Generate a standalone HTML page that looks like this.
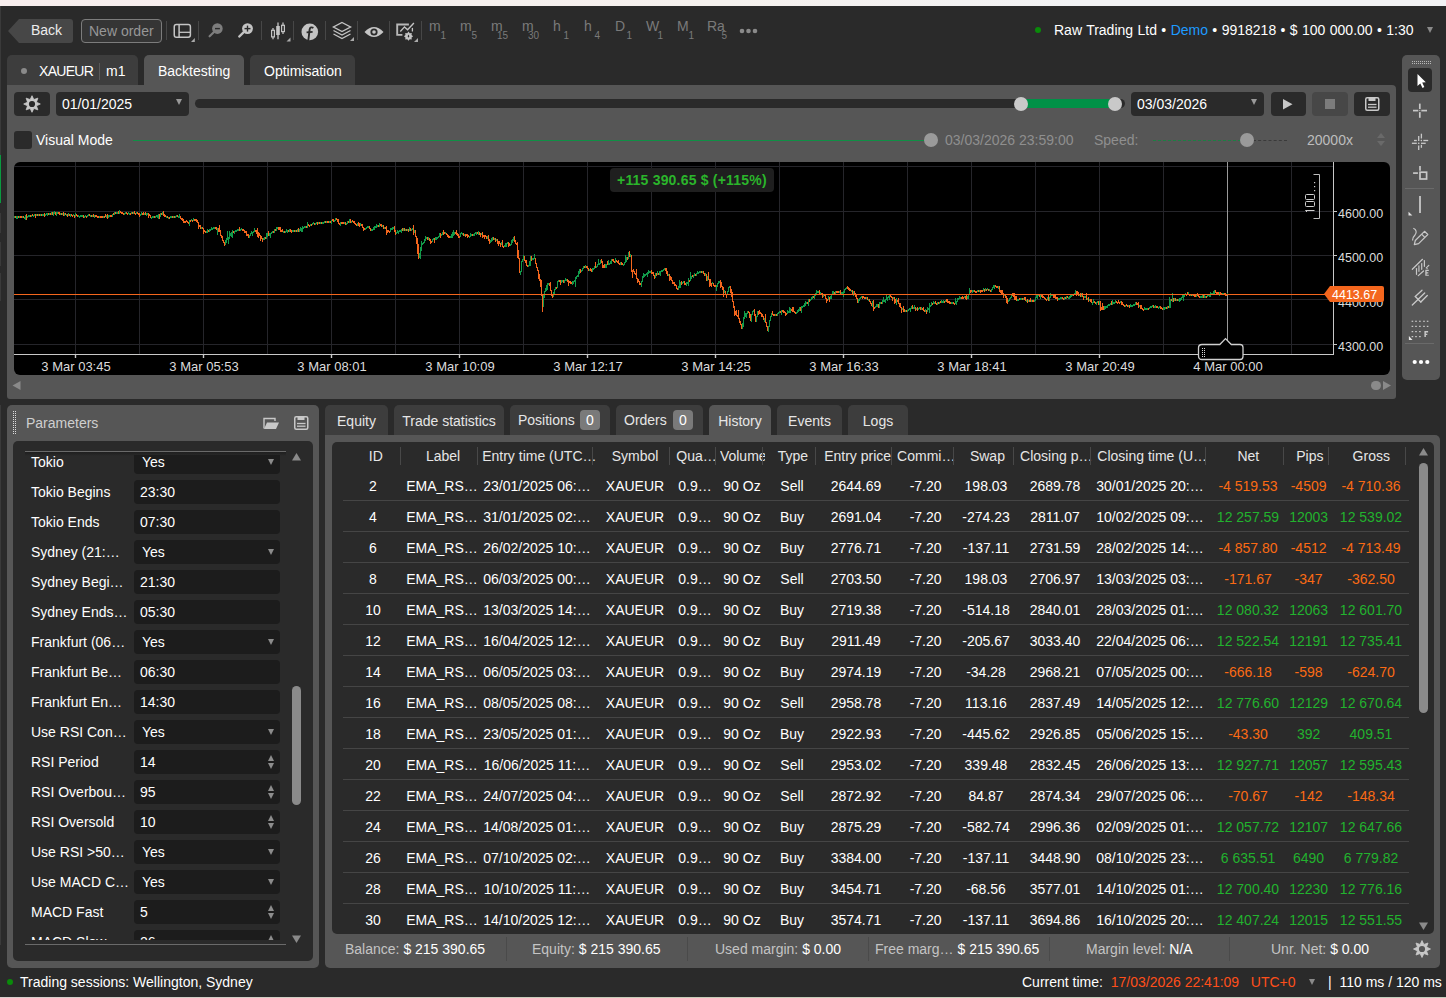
<!DOCTYPE html><html><head><meta charset="utf-8"><style>
*{box-sizing:border-box;margin:0;padding:0}
html,body{width:1446px;height:998px;overflow:hidden;background:#2a2a2a;font-family:"Liberation Sans",sans-serif;font-size:14px;line-height:16px;color:#fff}
.a{position:absolute;white-space:nowrap}
.sep{position:absolute;width:1px;background:#474747;top:21px;height:19px}
.tab{position:absolute;background:#3d3d3d;border-radius:5px 5px 0 0;height:30px;top:55px}
.tf{position:absolute;top:18px;color:#7a7a7a;font-size:14px}
.tf i{position:absolute;font-style:normal;font-size:10px;line-height:10px;top:13px}
.pl{position:absolute;left:31px;color:#fff}
.pb{position:absolute;left:134px;width:146px;height:24px;background:#1c1c1c;border-radius:4px}
.dd{position:absolute;left:268px;width:0;height:0;border-left:3px solid transparent;border-right:3px solid transparent;border-top:6px solid #8c8c8c}
.su{position:absolute;left:268px;width:0;height:0;border-left:3px solid transparent;border-right:3px solid transparent;border-bottom:6px solid #8c8c8c}
.sd{position:absolute;left:268px;width:0;height:0;border-left:3px solid transparent;border-right:3px solid transparent;border-top:6px solid #8c8c8c}
.th{position:absolute;top:448px;color:#e6e6e6;text-align:center;white-space:nowrap}
.hs{position:absolute;top:447px;width:1px;height:18px;background:#484848}
.rl{position:absolute;left:343px;width:1066px;height:1px;background:#454545}
.c{position:absolute;text-align:center;white-space:nowrap;color:#fff}
.g{color:#22b22e!important}.o{color:#fb6a14!important}
.ft{position:absolute;top:941px;color:#c4c4c4;white-space:nowrap}
.ft b{font-weight:normal;color:#fff}
.fs{position:absolute;top:937px;width:1px;height:24px;background:#4a4a4a}
.xl{position:absolute;top:359px;font-size:13px;color:#dcdcdc;text-align:center;width:100px}
.yl{position:absolute;left:1338px;font-size:12.5px;color:#dcdcdc}
</style></head><body>
<div class="a" style="left:0;top:0;width:1446px;height:6px;background:linear-gradient(to right,#f8eeee,#f5f1ee 50%,#f2f2f4 75%,#f2f2f4)"></div>
<div class="a" style="left:0;top:6px;width:1px;height:149px;background:#3a3a3a"></div>
<div class="a" style="left:0;top:155px;width:1px;height:48px;background:#0a9a40"></div>
<div class="a" style="left:0;top:213px;width:1px;height:20px;background:#3a3a3a"></div>
<div class="a" style="left:0;top:242px;width:1px;height:24px;background:#3a3a3a"></div>
<div class="a" style="left:0;top:273px;width:1px;height:28px;background:#3a3a3a"></div>
<div class="a" style="left:0;top:405px;width:1px;height:540px;background:#3a3a3a"></div>
<div class="a" style="left:0;top:997px;width:1446px;height:1px;background:linear-gradient(to right,#d8cfcc,#c9cdb9 45%,#c3cfbd)"></div>
<svg class="a" style="left:8px;top:19px" width="65" height="24"><path d="M11 0 H62 Q65 0 65 3 V21 Q65 24 62 24 H11 L0 12 Z" fill="#474747"/></svg>
<div class="a" style="left:31px;top:22px;color:#ececec">Back</div>
<div class="a" style="left:81px;top:19px;width:81px;height:24px;border:1px solid #7c7c7c;border-radius:4px;background:#353535"></div>
<div class="a" style="left:89px;top:23px;color:#979797">New order</div>
<div class="sep" style="left:166px"></div>
<div class="sep" style="left:198px"></div>
<div class="sep" style="left:261px"></div>
<div class="sep" style="left:293px"></div>
<div class="sep" style="left:325px"></div>
<div class="sep" style="left:357px"></div>
<div class="sep" style="left:389px"></div>
<div class="sep" style="left:421px"></div>
<svg class="a" style="left:172px;top:22px" width="26" height="22">
<rect x="2.25" y="2.5" width="16.15" height="12.8" rx="2.2" fill="none" stroke="#c4c4c4" stroke-width="1.5"/>
<line x1="7.1" y1="3" x2="7.1" y2="15" stroke="#c4c4c4" stroke-width="1.5"/><line x1="7.1" y1="10.3" x2="18" y2="10.3" stroke="#c4c4c4" stroke-width="1.3"/>
<path d="M22.8 16 L22.8 20 L19 20 Z" fill="#aaa"/></svg>
<svg class="a" style="left:206px;top:22px" width="20" height="18">
<circle cx="11.4" cy="6.6" r="5.3" fill="#7d7d7d"/><line x1="3.6" y1="14.3" x2="8" y2="10" stroke="#7d7d7d" stroke-width="2.2" stroke-linecap="round"/>
<line x1="9" y1="6.6" x2="13.9" y2="6.6" stroke="#2a2a2a" stroke-width="1.4"/></svg>
<svg class="a" style="left:236px;top:22px" width="20" height="18">
<circle cx="11.5" cy="6.6" r="5.4" fill="#c4c4c4"/><line x1="3.2" y1="14.6" x2="7.5" y2="10.4" stroke="#c4c4c4" stroke-width="2.2" stroke-linecap="round"/>
<line x1="8.5" y1="6.6" x2="14.5" y2="6.6" stroke="#2a2a2a" stroke-width="1.4"/><line x1="11.5" y1="3.6" x2="11.5" y2="9.6" stroke="#2a2a2a" stroke-width="1.4"/></svg>
<svg class="a" style="left:269px;top:21px" width="24" height="22">
<line x1="4" y1="7" x2="4" y2="18.2" stroke="#c4c4c4" stroke-width="1.3"/><rect x="2.6" y="9.3" width="2.8" height="6.6" fill="#2a2a2a" stroke="#c4c4c4" stroke-width="1.2"/>
<line x1="9" y1="1.6" x2="9" y2="18.2" stroke="#c4c4c4" stroke-width="1.3"/><rect x="7.2" y="5" width="3.6" height="9" fill="#c4c4c4"/>
<line x1="14" y1="1.6" x2="14" y2="13" stroke="#c4c4c4" stroke-width="1.3"/><rect x="12.6" y="4.3" width="2.8" height="6.3" fill="#2a2a2a" stroke="#c4c4c4" stroke-width="1.2"/>
<path d="M21.5 16.5 L21.5 20.5 L17.5 20.5 Z" fill="#aaa"/></svg>
<svg class="a" style="left:301px;top:23px" width="18" height="18">
<circle cx="8.8" cy="8.9" r="8.3" fill="#c4c4c4"/>
<path d="M12.4 4.9 C10.8 3.9 8.9 4.2 8.6 6.6 L7.4 17" fill="none" stroke="#2a2a2a" stroke-width="1.9"/>
<line x1="5.6" y1="9.4" x2="11.6" y2="8.9" stroke="#2a2a2a" stroke-width="1.8"/></svg>
<svg class="a" style="left:332px;top:21px" width="24" height="22">
<path d="M10 1.5 L18.5 6 L10 10.5 L1.5 6 Z" fill="none" stroke="#c4c4c4" stroke-width="1.4"/>
<path d="M1.5 9.5 L10 14 L18.5 9.5" fill="none" stroke="#c4c4c4" stroke-width="1.4"/>
<path d="M1.5 13 L10 17.5 L18.5 13" fill="none" stroke="#c4c4c4" stroke-width="1.4"/>
<path d="M22 16 L22 20 L18 20 Z" fill="#aaa"/></svg>
<svg class="a" style="left:364px;top:25px" width="20" height="14">
<path d="M0.5 7 Q10 -3 19.5 7 Q10 17 0.5 7 Z" fill="#c4c4c4"/>
<circle cx="10" cy="7" r="3.6" fill="#2a2a2a"/><circle cx="10" cy="7" r="1.8" fill="#c4c4c4"/></svg>
<svg class="a" style="left:395px;top:22px" width="25" height="22">
<path d="M13.9 2.5 H2.2 V12.9 H7.4" fill="none" stroke="#b8b8b8" stroke-width="1.9"/>
<path d="M5.3 9.5 L9.5 4.9 L12.6 7.7 L18.9 0.9" fill="none" stroke="#c4c4c4" stroke-width="1.4"/>
<line x1="17.4" y1="5.9" x2="17.4" y2="9.5" stroke="#c4c4c4" stroke-width="1.3"/>
<polygon points="13.50,9.60 14.76,11.15 16.75,10.95 16.55,12.94 18.10,14.20 16.55,15.46 16.75,17.45 14.76,17.25 13.50,18.80 12.24,17.25 10.25,17.45 10.45,15.46 8.90,14.20 10.45,12.94 10.25,10.95 12.24,11.15" fill="#c4c4c4"/><path d="M13.5 12.6 L14.4 14.2 L13.5 15.8 L12.6 14.2 Z" fill="#2a2a2a"/>
<path d="M23 16 L23 20 L19 20 Z" fill="#aaa"/></svg>
<div class="tf" style="left:429px">m<i style="left:0;width:17px;text-align:right">1</i></div>
<div class="tf" style="left:460px">m<i style="left:0;width:17px;text-align:right">5</i></div>
<div class="tf" style="left:491px">m<i style="left:0;width:17px;text-align:right">15</i></div>
<div class="tf" style="left:522px">m<i style="left:0;width:17px;text-align:right">30</i></div>
<div class="tf" style="left:553px">h<i style="left:0;width:16px;text-align:right">1</i></div>
<div class="tf" style="left:584px">h<i style="left:0;width:16px;text-align:right">4</i></div>
<div class="tf" style="left:615px">D<i style="left:0;width:17px;text-align:right">1</i></div>
<div class="tf" style="left:646px">W<i style="left:0;width:17px;text-align:right">1</i></div>
<div class="tf" style="left:677px">M<i style="left:0;width:17px;text-align:right">1</i></div>
<div class="tf" style="left:707px">Ra<i style="left:0;width:20px;text-align:right">5</i></div>
<svg class="a" style="left:739px;top:28px" width="20" height="6"><circle cx="3" cy="3" r="2.3" fill="#8a8a8a"/><circle cx="9.5" cy="3" r="2.3" fill="#8a8a8a"/><circle cx="16" cy="3" r="2.3" fill="#8a8a8a"/></svg>
<div class="a" style="left:1035px;top:27px;width:6px;height:6px;border-radius:3px;background:#0a8a0a"></div>
<div class="a" style="left:1054px;top:22px;color:#fff;word-spacing:0.5px">Raw Trading Ltd • <span style="color:#1e9bff">Demo</span> • 9918218 • $ 100 000.00 • 1:30</div>
<div class="a" style="left:1427px;top:27px;width:0;height:0;border-left:3px solid transparent;border-right:3px solid transparent;border-top:6px solid #8a8a8a"></div>
<div class="tab" style="left:7px;width:131px"></div>
<div class="a" style="left:21px;top:68px;width:6px;height:6px;border-radius:3px;background:#8a8a8a"></div>
<div class="a" style="left:39px;top:63px;letter-spacing:-0.7px">XAUEUR</div>
<div class="a" style="left:99px;top:63px;width:1px;height:17px;background:#5a5a5a"></div>
<div class="a" style="left:106px;top:63px">m1</div>
<div class="tab" style="left:144px;width:100px;background:#565656"></div>
<div class="a" style="left:158px;top:63px">Backtesting</div>
<div class="tab" style="left:250px;width:105px"></div>
<div class="a" style="left:264px;top:63px">Optimisation</div>
<div class="a" style="left:7px;top:85px;width:1389px;height:314px;background:#565656;border-radius:0 4px 3px 3px"></div>
<div class="a" style="left:14px;top:92px;width:36px;height:24px;background:#2a2a2a;border-radius:4px"></div>
<svg class="a" style="left:22px;top:94px" width="20" height="20"><polygon points="10.00,1.70 11.84,5.55 15.87,4.13 14.45,8.16 18.30,10.00 14.45,11.84 15.87,15.87 11.84,14.45 10.00,18.30 8.16,14.45 4.13,15.87 5.55,11.84 1.70,10.00 5.55,8.16 4.13,4.13 8.16,5.55" fill="#c8c8c8" stroke="#c8c8c8" stroke-width="0.8" stroke-linejoin="round"/><circle cx="10" cy="10" r="4.6" fill="#c8c8c8"/><circle cx="10" cy="10" r="3.1" fill="#2a2a2a"/></svg>
<div class="a" style="left:56px;top:92px;width:133px;height:24px;background:#2a2a2a;border-radius:4px"></div>
<div class="a" style="left:62px;top:96px">01/01/2025</div>
<div class="a" style="left:176px;top:99px;width:0;height:0;border-left:3px solid transparent;border-right:3px solid transparent;border-top:6px solid #999"></div>
<div class="a" style="left:195px;top:99px;width:930px;height:9px;background:#2a2a2a;border-radius:4.5px"></div>
<div class="a" style="left:1021px;top:99px;width:94px;height:9px;background:#009147"></div>
<div class="a" style="left:1014px;top:97px;width:14px;height:14px;border-radius:7px;background:#c9c9c9"></div>
<div class="a" style="left:1108px;top:97px;width:14px;height:14px;border-radius:7px;background:#c9c9c9"></div>
<div class="a" style="left:1131px;top:92px;width:133px;height:24px;background:#2a2a2a;border-radius:4px"></div>
<div class="a" style="left:1137px;top:96px">03/03/2026</div>
<div class="a" style="left:1251px;top:99px;width:0;height:0;border-left:3px solid transparent;border-right:3px solid transparent;border-top:6px solid #999"></div>
<div class="a" style="left:1271px;top:92px;width:35px;height:24px;background:#2a2a2a;border-radius:4px"></div>
<svg class="a" style="left:1283px;top:99px" width="10" height="11"><path d="M0 0 L9.5 5.3 L0 10.6 Z" fill="#c8c8c8"/></svg>
<div class="a" style="left:1312px;top:92px;width:36px;height:24px;background:#474747;border-radius:4px"></div>
<div class="a" style="left:1325px;top:99px;width:10px;height:10px;background:#7c7c7c"></div>
<div class="a" style="left:1354px;top:92px;width:36px;height:24px;background:#2a2a2a;border-radius:4px"></div>
<svg class="a" style="left:1365px;top:97px" width="15" height="14"><rect x="0.75" y="0.75" width="13" height="12.5" rx="1.5" fill="none" stroke="#c8c8c8" stroke-width="1.5"/>
<rect x="3.5" y="0.5" width="7" height="3.5" fill="#c8c8c8"/><line x1="3" y1="7.5" x2="11.5" y2="7.5" stroke="#c8c8c8" stroke-width="1.3"/><line x1="3" y1="10.2" x2="11.5" y2="10.2" stroke="#c8c8c8" stroke-width="1.3"/></svg>
<div class="a" style="left:14px;top:131px;width:18px;height:18px;background:#2a2a2a;border-radius:3px"></div>
<div class="a" style="left:36px;top:132px">Visual Mode</div>
<div class="a" style="left:133px;top:140px;width:799px;height:1px;background:#0f8f45"></div>
<div class="a" style="left:924px;top:133px;width:14px;height:14px;border-radius:7px;background:#9a9a9a"></div>
<div class="a" style="left:945px;top:132px;color:#8f8f8f">03/03/2026 23:59:00</div>
<div class="a" style="left:1094px;top:132px;color:#8f8f8f">Speed:</div>
<div class="a" style="left:1153px;top:140px;width:93px;height:0;border-top:1px dashed #1c7f43"></div>
<div class="a" style="left:1253px;top:140px;width:34px;height:0;border-top:1px dashed #3a3a3a"></div>
<div class="a" style="left:1240px;top:133px;width:14px;height:14px;border-radius:7px;background:#9a9a9a"></div>
<div class="a" style="left:1307px;top:132px;color:#bdbdbd">20000x</div>
<div class="a" style="left:1377px;top:133px;width:0;height:0;border-left:4px solid transparent;border-right:4px solid transparent;border-bottom:5px solid #6a6a6a"></div>
<div class="a" style="left:1377px;top:141px;width:0;height:0;border-left:4px solid transparent;border-right:4px solid transparent;border-top:5px solid #6a6a6a"></div>
<svg class="a" style="left:0;top:0" width="1446" height="998">
<defs><clipPath id="cc"><rect x="14" y="162" width="1376" height="213" rx="6"/></clipPath><clipPath id="pc"><rect x="14" y="162" width="1319" height="192"/></clipPath></defs>
<rect x="14" y="162" width="1376" height="213" rx="6" fill="#000"/>
<g clip-path="url(#pc)">
<line x1="75.5" y1="162" x2="75.5" y2="354" stroke="#25252a" stroke-width="1"/>
<line x1="139.5" y1="162" x2="139.5" y2="354" stroke="#25252a" stroke-width="1"/>
<line x1="203.5" y1="162" x2="203.5" y2="354" stroke="#25252a" stroke-width="1"/>
<line x1="267.5" y1="162" x2="267.5" y2="354" stroke="#25252a" stroke-width="1"/>
<line x1="331.5" y1="162" x2="331.5" y2="354" stroke="#25252a" stroke-width="1"/>
<line x1="395.5" y1="162" x2="395.5" y2="354" stroke="#25252a" stroke-width="1"/>
<line x1="459.5" y1="162" x2="459.5" y2="354" stroke="#25252a" stroke-width="1"/>
<line x1="523.5" y1="162" x2="523.5" y2="354" stroke="#25252a" stroke-width="1"/>
<line x1="587.5" y1="162" x2="587.5" y2="354" stroke="#25252a" stroke-width="1"/>
<line x1="651.5" y1="162" x2="651.5" y2="354" stroke="#25252a" stroke-width="1"/>
<line x1="715.5" y1="162" x2="715.5" y2="354" stroke="#25252a" stroke-width="1"/>
<line x1="779.5" y1="162" x2="779.5" y2="354" stroke="#25252a" stroke-width="1"/>
<line x1="843.5" y1="162" x2="843.5" y2="354" stroke="#25252a" stroke-width="1"/>
<line x1="907.5" y1="162" x2="907.5" y2="354" stroke="#25252a" stroke-width="1"/>
<line x1="971.5" y1="162" x2="971.5" y2="354" stroke="#25252a" stroke-width="1"/>
<line x1="1035.5" y1="162" x2="1035.5" y2="354" stroke="#25252a" stroke-width="1"/>
<line x1="1099.5" y1="162" x2="1099.5" y2="354" stroke="#25252a" stroke-width="1"/>
<line x1="1163.5" y1="162" x2="1163.5" y2="354" stroke="#25252a" stroke-width="1"/>
<line x1="1227.5" y1="162" x2="1227.5" y2="354" stroke="#25252a" stroke-width="1"/>
<line x1="1291.5" y1="162" x2="1291.5" y2="354" stroke="#25252a" stroke-width="1"/>
<line x1="14" y1="166.5" x2="1333" y2="166.5" stroke="#25252a" stroke-width="1"/>
<line x1="14" y1="211.5" x2="1333" y2="211.5" stroke="#25252a" stroke-width="1"/>
<line x1="14" y1="255.5" x2="1333" y2="255.5" stroke="#25252a" stroke-width="1"/>
<line x1="14" y1="299.5" x2="1333" y2="299.5" stroke="#25252a" stroke-width="1"/>
<line x1="14" y1="344.5" x2="1333" y2="344.5" stroke="#25252a" stroke-width="1"/>
<line x1="1227.5" y1="162" x2="1227.5" y2="340" stroke="#9a9a9a" stroke-width="1"/>
<path d="M15 216h1V218h-1ZM18 216h1V218h-1ZM20 216h1V218h-1ZM21 216h1V218h-1ZM23 216h1V218h-1ZM26 214h1V220h-1ZM30 215h1V217h-1ZM32 214h1V216h-1ZM35 214h1V218h-1ZM37 214h1V216h-1ZM39 214h1V216h-1ZM41 214h1V216h-1ZM44 213h1V217h-1ZM48 213h1V215h-1ZM50 213h1V215h-1ZM52 212h1V215h-1ZM55 212h1V215h-1ZM58 212h1V214h-1ZM59 212h1V215h-1ZM61 213h1V215h-1ZM63 212h1V216h-1ZM65 213h1V215h-1ZM67 214h1V217h-1ZM69 214h1V216h-1ZM71 214h1V216h-1ZM72 215h1V217h-1ZM74 215h1V218h-1ZM76 214h1V216h-1ZM77 215h1V217h-1ZM83 215h1V218h-1ZM86 216h1V218h-1ZM89 214h1V216h-1ZM91 215h1V217h-1ZM93 214h1V217h-1ZM95 215h1V217h-1ZM96 215h1V217h-1ZM97 216h1V218h-1ZM98 216h1V218h-1ZM100 216h1V218h-1ZM101 216h1V218h-1ZM102 216h1V218h-1ZM104 216h1V218h-1ZM105 214h1V217h-1ZM107 214h1V219h-1ZM110 215h1V217h-1ZM111 215h1V217h-1ZM113 213h1V215h-1ZM115 212h1V214h-1ZM118 211h1V214h-1ZM120 211h1V213h-1ZM121 212h1V214h-1ZM122 212h1V214h-1ZM123 213h1V215h-1ZM126 212h1V214h-1ZM127 213h1V215h-1ZM130 213h1V215h-1ZM132 212h1V214h-1ZM134 211h1V214h-1ZM135 213h1V215h-1ZM137 212h1V214h-1ZM138 213h1V215h-1ZM139 213h1V217h-1ZM142 213h1V215h-1ZM143 212h1V215h-1ZM145 212h1V215h-1ZM148 213h1V218h-1ZM149 214h1V216h-1ZM150 215h1V218h-1ZM154 216h1V218h-1ZM159 214h1V219h-1ZM161 213h1V215h-1ZM163 211h1V216h-1ZM164 214h1V217h-1ZM165 215h1V217h-1ZM167 216h1V218h-1ZM169 217h1V219h-1ZM172 216h1V218h-1ZM174 216h1V218h-1ZM177 215h1V217h-1ZM180 216h1V219h-1ZM181 218h1V220h-1ZM182 218h1V221h-1ZM183 219h1V223h-1ZM184 221h1V223h-1ZM185 221h1V223h-1ZM186 220h1V222h-1ZM187 221h1V223h-1ZM188 222h1V224h-1ZM190 220h1V222h-1ZM192 220h1V222h-1ZM194 219h1V221h-1ZM195 219h1V221h-1ZM196 219h1V222h-1ZM197 220h1V223h-1ZM198 222h1V229h-1ZM199 225h1V227h-1ZM200 225h1V229h-1ZM202 227h1V229h-1ZM203 228h1V234h-1ZM204 230h1V232h-1ZM205 231h1V233h-1ZM208 230h1V232h-1ZM215 227h1V229h-1ZM216 227h1V230h-1ZM218 228h1V232h-1ZM219 225h1V232h-1ZM220 230h1V236h-1ZM221 235h1V238h-1ZM222 236h1V241h-1ZM223 240h1V243h-1ZM224 242h1V246h-1ZM233 231h1V233h-1ZM239 227h1V231h-1ZM242 229h1V231h-1ZM243 229h1V231h-1ZM244 230h1V233h-1ZM245 231h1V233h-1ZM246 231h1V236h-1ZM247 234h1V236h-1ZM248 234h1V238h-1ZM255 230h1V232h-1ZM256 230h1V234h-1ZM257 228h1V237h-1ZM258 232h1V238h-1ZM259 233h1V236h-1ZM260 235h1V241h-1ZM261 236h1V239h-1ZM262 238h1V242h-1ZM265 237h1V239h-1ZM268 231h1V236h-1ZM273 231h1V233h-1ZM275 229h1V231h-1ZM278 227h1V230h-1ZM279 227h1V230h-1ZM280 227h1V232h-1ZM281 230h1V232h-1ZM282 229h1V232h-1ZM284 231h1V233h-1ZM288 230h1V232h-1ZM290 229h1V232h-1ZM291 230h1V233h-1ZM294 230h1V232h-1ZM296 230h1V232h-1ZM298 228h1V232h-1ZM306 226h1V228h-1ZM308 224h1V226h-1ZM309 225h1V227h-1ZM311 224h1V226h-1ZM314 223h1V225h-1ZM317 222h1V225h-1ZM319 222h1V224h-1ZM321 222h1V224h-1ZM325 221h1V223h-1ZM327 221h1V223h-1ZM328 221h1V223h-1ZM330 221h1V223h-1ZM332 219h1V221h-1ZM333 219h1V222h-1ZM336 218h1V220h-1ZM337 219h1V222h-1ZM338 219h1V224h-1ZM339 223h1V225h-1ZM341 222h1V224h-1ZM342 222h1V224h-1ZM343 222h1V224h-1ZM345 222h1V225h-1ZM348 221h1V223h-1ZM350 219h1V223h-1ZM352 220h1V222h-1ZM353 221h1V223h-1ZM354 221h1V224h-1ZM355 223h1V225h-1ZM356 224h1V226h-1ZM358 222h1V226h-1ZM359 223h1V227h-1ZM361 224h1V226h-1ZM362 224h1V228h-1ZM363 227h1V231h-1ZM364 228h1V230h-1ZM369 226h1V229h-1ZM370 228h1V231h-1ZM378 225h1V227h-1ZM380 224h1V226h-1ZM381 224h1V227h-1ZM383 225h1V229h-1ZM385 227h1V229h-1ZM386 226h1V235h-1ZM387 230h1V233h-1ZM388 230h1V232h-1ZM389 231h1V233h-1ZM394 226h1V232h-1ZM395 230h1V235h-1ZM402 228h1V231h-1ZM404 228h1V231h-1ZM406 229h1V231h-1ZM408 229h1V232h-1ZM410 228h1V231h-1ZM413 225h1V235h-1ZM415 230h1V237h-1ZM416 236h1V244h-1ZM417 238h1V254h-1ZM418 244h1V259h-1ZM427 237h1V240h-1ZM429 238h1V241h-1ZM430 239h1V244h-1ZM431 241h1V243h-1ZM434 238h1V243h-1ZM440 233h1V238h-1ZM443 230h1V235h-1ZM444 232h1V234h-1ZM446 233h1V235h-1ZM447 234h1V237h-1ZM448 235h1V238h-1ZM449 236h1V238h-1ZM455 232h1V234h-1ZM456 230h1V235h-1ZM457 233h1V236h-1ZM458 234h1V238h-1ZM459 236h1V238h-1ZM463 233h1V236h-1ZM465 234h1V237h-1ZM466 234h1V236h-1ZM467 234h1V238h-1ZM468 235h1V237h-1ZM472 234h1V236h-1ZM477 232h1V234h-1ZM479 232h1V235h-1ZM480 233h1V237h-1ZM482 232h1V238h-1ZM483 235h1V237h-1ZM484 235h1V239h-1ZM485 235h1V237h-1ZM486 236h1V239h-1ZM488 235h1V241h-1ZM489 239h1V244h-1ZM493 237h1V240h-1ZM495 238h1V242h-1ZM497 239h1V244h-1ZM498 241h1V246h-1ZM499 241h1V244h-1ZM500 243h1V247h-1ZM502 240h1V247h-1ZM503 246h1V248h-1ZM508 242h1V247h-1ZM509 243h1V246h-1ZM514 236h1V242h-1ZM515 240h1V244h-1ZM516 243h1V245h-1ZM517 242h1V258h-1ZM518 250h1V259h-1ZM519 258h1V273h-1ZM524 256h1V261h-1ZM525 260h1V263h-1ZM526 260h1V266h-1ZM527 265h1V267h-1ZM531 256h1V261h-1ZM535 258h1V264h-1ZM536 263h1V268h-1ZM537 267h1V271h-1ZM538 270h1V279h-1ZM539 274h1V281h-1ZM540 279h1V287h-1ZM541 280h1V296h-1ZM542 294h1V312h-1ZM549 283h1V286h-1ZM550 282h1V291h-1ZM551 290h1V296h-1ZM552 295h1V298h-1ZM556 287h1V289h-1ZM559 280h1V282h-1ZM560 280h1V285h-1ZM563 280h1V283h-1ZM567 279h1V282h-1ZM568 280h1V286h-1ZM569 281h1V283h-1ZM570 281h1V284h-1ZM571 282h1V284h-1ZM580 269h1V273h-1ZM584 266h1V268h-1ZM586 266h1V268h-1ZM587 266h1V269h-1ZM588 268h1V271h-1ZM590 268h1V271h-1ZM591 269h1V272h-1ZM595 262h1V268h-1ZM601 259h1V263h-1ZM602 261h1V268h-1ZM603 265h1V268h-1ZM604 264h1V268h-1ZM607 261h1V265h-1ZM612 259h1V261h-1ZM613 259h1V262h-1ZM614 261h1V263h-1ZM616 260h1V262h-1ZM617 261h1V263h-1ZM618 260h1V264h-1ZM619 263h1V265h-1ZM621 262h1V265h-1ZM622 263h1V265h-1ZM627 257h1V260h-1ZM629 251h1V257h-1ZM631 255h1V272h-1ZM632 270h1V278h-1ZM633 269h1V272h-1ZM634 271h1V274h-1ZM635 273h1V275h-1ZM636 269h1V279h-1ZM637 278h1V283h-1ZM638 279h1V282h-1ZM639 281h1V285h-1ZM640 283h1V285h-1ZM651 270h1V274h-1ZM652 272h1V274h-1ZM653 272h1V276h-1ZM654 275h1V279h-1ZM656 273h1V276h-1ZM658 273h1V275h-1ZM665 268h1V271h-1ZM666 268h1V274h-1ZM667 271h1V276h-1ZM669 274h1V281h-1ZM670 276h1V280h-1ZM671 277h1V281h-1ZM672 280h1V284h-1ZM673 282h1V284h-1ZM674 282h1V286h-1ZM675 284h1V286h-1ZM676 285h1V289h-1ZM677 288h1V290h-1ZM681 281h1V285h-1ZM684 281h1V285h-1ZM685 283h1V285h-1ZM689 280h1V282h-1ZM692 275h1V277h-1ZM695 274h1V276h-1ZM701 271h1V273h-1ZM703 271h1V274h-1ZM704 273h1V276h-1ZM706 274h1V281h-1ZM708 272h1V280h-1ZM709 279h1V287h-1ZM710 279h1V286h-1ZM711 283h1V287h-1ZM713 283h1V286h-1ZM714 285h1V287h-1ZM715 285h1V287h-1ZM720 280h1V288h-1ZM721 282h1V287h-1ZM722 286h1V290h-1ZM723 287h1V297h-1ZM725 291h1V295h-1ZM726 294h1V298h-1ZM730 286h1V293h-1ZM731 289h1V297h-1ZM732 292h1V302h-1ZM733 301h1V308h-1ZM734 306h1V316h-1ZM735 311h1V315h-1ZM736 310h1V316h-1ZM737 315h1V317h-1ZM738 310h1V319h-1ZM739 318h1V323h-1ZM740 321h1V325h-1ZM741 324h1V329h-1ZM748 311h1V313h-1ZM749 312h1V318h-1ZM750 314h1V321h-1ZM754 309h1V316h-1ZM755 314h1V322h-1ZM758 311h1V315h-1ZM759 310h1V314h-1ZM760 312h1V314h-1ZM761 313h1V317h-1ZM762 314h1V317h-1ZM763 316h1V320h-1ZM765 314h1V323h-1ZM766 322h1V327h-1ZM767 326h1V331h-1ZM772 311h1V315h-1ZM773 314h1V316h-1ZM774 314h1V316h-1ZM776 314h1V316h-1ZM780 311h1V313h-1ZM782 310h1V312h-1ZM783 310h1V313h-1ZM784 311h1V313h-1ZM785 312h1V316h-1ZM786 313h1V315h-1ZM791 309h1V311h-1ZM792 307h1V312h-1ZM793 307h1V312h-1ZM794 311h1V313h-1ZM795 312h1V314h-1ZM800 307h1V311h-1ZM807 302h1V304h-1ZM809 299h1V302h-1ZM813 296h1V298h-1ZM819 290h1V294h-1ZM821 293h1V295h-1ZM822 293h1V298h-1ZM824 294h1V296h-1ZM825 295h1V299h-1ZM826 298h1V303h-1ZM827 299h1V301h-1ZM829 297h1V302h-1ZM834 292h1V294h-1ZM836 291h1V293h-1ZM837 291h1V293h-1ZM838 291h1V293h-1ZM840 290h1V294h-1ZM847 286h1V289h-1ZM848 287h1V290h-1ZM849 288h1V291h-1ZM850 289h1V291h-1ZM852 290h1V295h-1ZM854 291h1V294h-1ZM855 293h1V297h-1ZM856 295h1V299h-1ZM857 298h1V303h-1ZM862 296h1V299h-1ZM863 296h1V298h-1ZM864 297h1V299h-1ZM865 297h1V299h-1ZM867 297h1V300h-1ZM869 299h1V302h-1ZM870 301h1V304h-1ZM871 303h1V306h-1ZM873 300h1V311h-1ZM874 307h1V309h-1ZM878 304h1V308h-1ZM881 302h1V304h-1ZM890 295h1V297h-1ZM891 296h1V298h-1ZM892 297h1V301h-1ZM894 297h1V304h-1ZM895 299h1V303h-1ZM897 300h1V302h-1ZM898 298h1V304h-1ZM899 303h1V307h-1ZM900 303h1V308h-1ZM901 307h1V313h-1ZM903 306h1V312h-1ZM904 309h1V312h-1ZM906 310h1V312h-1ZM912 305h1V309h-1ZM915 307h1V311h-1ZM917 307h1V311h-1ZM920 307h1V310h-1ZM922 308h1V310h-1ZM923 307h1V311h-1ZM924 310h1V312h-1ZM926 310h1V314h-1ZM932 303h1V305h-1ZM935 301h1V304h-1ZM936 303h1V305h-1ZM938 302h1V304h-1ZM940 301h1V303h-1ZM944 301h1V303h-1ZM946 299h1V302h-1ZM947 299h1V303h-1ZM948 301h1V303h-1ZM949 301h1V304h-1ZM950 302h1V304h-1ZM953 302h1V304h-1ZM954 303h1V305h-1ZM961 297h1V299h-1ZM962 296h1V299h-1ZM963 297h1V299h-1ZM965 296h1V299h-1ZM966 294h1V300h-1ZM970 290h1V293h-1ZM971 290h1V292h-1ZM974 290h1V292h-1ZM975 291h1V293h-1ZM976 291h1V293h-1ZM978 290h1V292h-1ZM980 290h1V293h-1ZM981 290h1V292h-1ZM982 290h1V292h-1ZM984 289h1V292h-1ZM986 289h1V291h-1ZM988 289h1V291h-1ZM990 290h1V292h-1ZM995 285h1V287h-1ZM996 286h1V288h-1ZM997 286h1V288h-1ZM999 286h1V292h-1ZM1000 290h1V293h-1ZM1001 290h1V295h-1ZM1002 290h1V295h-1ZM1003 293h1V298h-1ZM1005 294h1V298h-1ZM1006 296h1V303h-1ZM1007 298h1V304h-1ZM1012 293h1V296h-1ZM1013 293h1V297h-1ZM1014 293h1V300h-1ZM1015 296h1V300h-1ZM1016 296h1V301h-1ZM1019 298h1V300h-1ZM1022 298h1V300h-1ZM1024 297h1V300h-1ZM1025 297h1V301h-1ZM1027 299h1V303h-1ZM1029 300h1V302h-1ZM1030 298h1V302h-1ZM1032 300h1V302h-1ZM1033 300h1V302h-1ZM1039 294h1V297h-1ZM1041 294h1V297h-1ZM1042 295h1V298h-1ZM1043 296h1V298h-1ZM1044 297h1V299h-1ZM1045 298h1V300h-1ZM1046 299h1V301h-1ZM1048 294h1V301h-1ZM1053 294h1V298h-1ZM1054 294h1V298h-1ZM1055 294h1V299h-1ZM1056 297h1V299h-1ZM1057 297h1V301h-1ZM1062 297h1V299h-1ZM1063 298h1V300h-1ZM1065 297h1V299h-1ZM1067 296h1V298h-1ZM1073 294h1V296h-1ZM1076 291h1V296h-1ZM1077 291h1V295h-1ZM1078 292h1V296h-1ZM1080 293h1V297h-1ZM1082 293h1V297h-1ZM1083 296h1V300h-1ZM1086 293h1V300h-1ZM1088 297h1V302h-1ZM1090 299h1V302h-1ZM1091 299h1V303h-1ZM1094 301h1V303h-1ZM1095 302h1V304h-1ZM1098 301h1V305h-1ZM1100 301h1V311h-1ZM1101 307h1V310h-1ZM1102 303h1V310h-1ZM1103 306h1V310h-1ZM1111 301h1V305h-1ZM1116 301h1V303h-1ZM1117 302h1V304h-1ZM1118 300h1V303h-1ZM1119 302h1V304h-1ZM1121 301h1V305h-1ZM1122 302h1V305h-1ZM1123 304h1V306h-1ZM1124 305h1V307h-1ZM1126 304h1V306h-1ZM1127 305h1V307h-1ZM1129 305h1V308h-1ZM1136 302h1V305h-1ZM1137 303h1V305h-1ZM1138 302h1V308h-1ZM1140 305h1V309h-1ZM1141 305h1V309h-1ZM1142 308h1V310h-1ZM1143 309h1V311h-1ZM1148 308h1V310h-1ZM1153 305h1V308h-1ZM1156 306h1V308h-1ZM1157 306h1V308h-1ZM1160 306h1V309h-1ZM1161 307h1V309h-1ZM1162 308h1V310h-1ZM1166 307h1V309h-1ZM1168 306h1V308h-1ZM1171 299h1V301h-1ZM1173 298h1V302h-1ZM1175 298h1V301h-1ZM1177 299h1V301h-1ZM1186 294h1V296h-1ZM1187 292h1V295h-1ZM1189 294h1V296h-1ZM1191 294h1V296h-1ZM1193 294h1V296h-1ZM1194 295h1V297h-1ZM1195 295h1V297h-1ZM1197 293h1V296h-1ZM1198 295h1V297h-1ZM1199 296h1V298h-1ZM1203 295h1V298h-1ZM1206 296h1V298h-1ZM1215 290h1V293h-1ZM1216 292h1V294h-1ZM1217 292h1V294h-1ZM1218 292h1V294h-1ZM1220 292h1V294h-1ZM1221 293h1V295h-1ZM1224 293h1V295h-1ZM1225 293h1V296h-1ZM1226 294h1V296h-1Z" fill="#f4661d" shape-rendering="crispEdges"/>
<path d="M14 216h1V218h-1ZM16 216h1V219h-1ZM17 216h1V219h-1ZM19 216h1V218h-1ZM22 216h1V218h-1ZM24 217h1V219h-1ZM25 215h1V220h-1ZM27 216h1V218h-1ZM28 215h1V217h-1ZM29 215h1V217h-1ZM31 215h1V217h-1ZM33 215h1V217h-1ZM34 214h1V216h-1ZM36 214h1V216h-1ZM38 214h1V216h-1ZM40 214h1V216h-1ZM42 214h1V216h-1ZM43 214h1V216h-1ZM45 214h1V216h-1ZM46 213h1V215h-1ZM47 213h1V216h-1ZM49 213h1V215h-1ZM51 212h1V215h-1ZM53 212h1V216h-1ZM54 211h1V214h-1ZM56 212h1V216h-1ZM57 212h1V214h-1ZM60 213h1V215h-1ZM62 213h1V215h-1ZM64 213h1V216h-1ZM66 214h1V216h-1ZM68 213h1V216h-1ZM70 214h1V217h-1ZM73 214h1V216h-1ZM75 213h1V217h-1ZM78 215h1V217h-1ZM79 216h1V218h-1ZM80 215h1V217h-1ZM81 215h1V217h-1ZM82 215h1V217h-1ZM84 216h1V218h-1ZM85 215h1V217h-1ZM87 215h1V217h-1ZM88 214h1V216h-1ZM90 215h1V217h-1ZM92 215h1V217h-1ZM94 215h1V218h-1ZM99 216h1V218h-1ZM103 216h1V218h-1ZM106 215h1V218h-1ZM108 215h1V218h-1ZM109 215h1V217h-1ZM112 214h1V217h-1ZM114 212h1V215h-1ZM116 212h1V214h-1ZM117 212h1V214h-1ZM119 210h1V214h-1ZM124 213h1V215h-1ZM125 212h1V214h-1ZM128 212h1V214h-1ZM129 213h1V215h-1ZM131 212h1V214h-1ZM133 212h1V214h-1ZM136 212h1V214h-1ZM140 214h1V216h-1ZM141 212h1V215h-1ZM144 213h1V215h-1ZM146 213h1V216h-1ZM147 213h1V215h-1ZM151 217h1V219h-1ZM152 216h1V218h-1ZM153 216h1V218h-1ZM155 216h1V218h-1ZM156 215h1V217h-1ZM157 215h1V218h-1ZM158 214h1V219h-1ZM160 213h1V217h-1ZM162 212h1V215h-1ZM166 216h1V218h-1ZM168 217h1V219h-1ZM170 216h1V218h-1ZM171 216h1V218h-1ZM173 216h1V218h-1ZM175 216h1V218h-1ZM176 215h1V217h-1ZM178 216h1V218h-1ZM179 214h1V218h-1ZM189 220h1V226h-1ZM191 219h1V221h-1ZM193 218h1V221h-1ZM201 227h1V229h-1ZM206 231h1V233h-1ZM207 229h1V233h-1ZM209 229h1V232h-1ZM210 229h1V231h-1ZM211 227h1V230h-1ZM212 228h1V230h-1ZM213 227h1V229h-1ZM214 227h1V229h-1ZM217 228h1V235h-1ZM225 240h1V245h-1ZM226 238h1V243h-1ZM227 231h1V240h-1ZM228 237h1V244h-1ZM229 231h1V239h-1ZM230 233h1V236h-1ZM231 232h1V237h-1ZM232 230h1V238h-1ZM234 231h1V234h-1ZM235 230h1V232h-1ZM236 230h1V232h-1ZM237 229h1V231h-1ZM238 229h1V231h-1ZM240 229h1V231h-1ZM241 228h1V230h-1ZM249 235h1V238h-1ZM250 233h1V236h-1ZM251 231h1V234h-1ZM252 232h1V236h-1ZM253 231h1V233h-1ZM254 228h1V232h-1ZM263 238h1V240h-1ZM264 237h1V240h-1ZM266 233h1V239h-1ZM267 233h1V237h-1ZM269 233h1V236h-1ZM270 233h1V238h-1ZM271 232h1V234h-1ZM272 231h1V233h-1ZM274 229h1V233h-1ZM276 227h1V231h-1ZM277 227h1V229h-1ZM283 231h1V233h-1ZM285 231h1V233h-1ZM286 229h1V232h-1ZM287 230h1V233h-1ZM289 229h1V232h-1ZM292 230h1V232h-1ZM293 230h1V232h-1ZM295 230h1V232h-1ZM297 229h1V232h-1ZM299 229h1V232h-1ZM300 227h1V231h-1ZM301 228h1V232h-1ZM302 226h1V232h-1ZM303 227h1V229h-1ZM304 226h1V228h-1ZM305 226h1V228h-1ZM307 222h1V228h-1ZM310 224h1V226h-1ZM312 223h1V225h-1ZM313 222h1V224h-1ZM315 223h1V225h-1ZM316 222h1V224h-1ZM318 222h1V224h-1ZM320 222h1V224h-1ZM322 222h1V224h-1ZM323 222h1V224h-1ZM324 221h1V223h-1ZM326 221h1V223h-1ZM329 221h1V223h-1ZM331 220h1V224h-1ZM334 220h1V222h-1ZM335 218h1V221h-1ZM340 222h1V226h-1ZM344 222h1V224h-1ZM346 223h1V225h-1ZM347 221h1V224h-1ZM349 219h1V223h-1ZM351 221h1V223h-1ZM357 223h1V226h-1ZM360 223h1V226h-1ZM365 228h1V230h-1ZM366 227h1V229h-1ZM367 226h1V228h-1ZM368 226h1V228h-1ZM371 229h1V231h-1ZM372 229h1V231h-1ZM373 227h1V230h-1ZM374 226h1V230h-1ZM375 226h1V228h-1ZM376 224h1V228h-1ZM377 225h1V227h-1ZM379 223h1V227h-1ZM382 225h1V227h-1ZM384 227h1V229h-1ZM390 228h1V232h-1ZM391 228h1V230h-1ZM392 227h1V230h-1ZM393 227h1V229h-1ZM396 232h1V234h-1ZM397 230h1V233h-1ZM398 231h1V234h-1ZM399 230h1V232h-1ZM400 230h1V232h-1ZM401 229h1V233h-1ZM403 228h1V231h-1ZM405 229h1V231h-1ZM407 229h1V231h-1ZM409 227h1V231h-1ZM411 229h1V231h-1ZM412 228h1V230h-1ZM414 230h1V233h-1ZM419 253h1V258h-1ZM420 247h1V259h-1ZM421 241h1V251h-1ZM422 243h1V245h-1ZM423 242h1V244h-1ZM424 239h1V243h-1ZM425 236h1V241h-1ZM426 237h1V239h-1ZM428 237h1V240h-1ZM432 239h1V242h-1ZM433 238h1V240h-1ZM435 237h1V240h-1ZM436 237h1V240h-1ZM437 237h1V239h-1ZM438 236h1V238h-1ZM439 233h1V237h-1ZM441 234h1V236h-1ZM442 232h1V235h-1ZM445 232h1V234h-1ZM450 236h1V238h-1ZM451 234h1V238h-1ZM452 232h1V238h-1ZM453 230h1V236h-1ZM454 232h1V235h-1ZM460 233h1V237h-1ZM461 232h1V234h-1ZM462 233h1V235h-1ZM464 234h1V236h-1ZM469 236h1V238h-1ZM470 233h1V237h-1ZM471 234h1V236h-1ZM473 234h1V236h-1ZM474 233h1V236h-1ZM475 232h1V234h-1ZM476 232h1V235h-1ZM478 231h1V235h-1ZM481 233h1V235h-1ZM487 236h1V239h-1ZM490 240h1V243h-1ZM491 238h1V242h-1ZM492 237h1V241h-1ZM494 238h1V240h-1ZM496 239h1V241h-1ZM501 242h1V245h-1ZM504 245h1V247h-1ZM505 243h1V247h-1ZM506 243h1V247h-1ZM507 242h1V244h-1ZM510 244h1V246h-1ZM511 240h1V245h-1ZM512 239h1V243h-1ZM513 237h1V241h-1ZM520 271h1V275h-1ZM521 261h1V272h-1ZM522 259h1V262h-1ZM523 255h1V260h-1ZM528 265h1V267h-1ZM529 261h1V266h-1ZM530 256h1V266h-1ZM532 258h1V260h-1ZM533 258h1V260h-1ZM534 254h1V259h-1ZM543 295h1V307h-1ZM544 291h1V298h-1ZM545 288h1V292h-1ZM546 285h1V291h-1ZM547 283h1V290h-1ZM548 283h1V285h-1ZM553 292h1V297h-1ZM554 289h1V295h-1ZM555 287h1V290h-1ZM557 281h1V288h-1ZM558 280h1V282h-1ZM561 280h1V283h-1ZM562 280h1V282h-1ZM564 280h1V283h-1ZM565 278h1V281h-1ZM566 279h1V281h-1ZM572 281h1V285h-1ZM573 281h1V284h-1ZM574 280h1V282h-1ZM575 277h1V287h-1ZM576 276h1V279h-1ZM577 275h1V277h-1ZM578 271h1V277h-1ZM579 269h1V274h-1ZM581 270h1V272h-1ZM582 268h1V271h-1ZM583 266h1V269h-1ZM585 265h1V268h-1ZM589 269h1V271h-1ZM592 268h1V272h-1ZM593 268h1V270h-1ZM594 266h1V269h-1ZM596 266h1V268h-1ZM597 264h1V267h-1ZM598 259h1V265h-1ZM599 263h1V265h-1ZM600 260h1V264h-1ZM605 264h1V268h-1ZM606 264h1V268h-1ZM608 260h1V265h-1ZM609 263h1V265h-1ZM610 261h1V264h-1ZM611 259h1V264h-1ZM615 258h1V263h-1ZM620 262h1V265h-1ZM623 264h1V266h-1ZM624 262h1V265h-1ZM625 255h1V263h-1ZM626 257h1V262h-1ZM628 252h1V259h-1ZM630 254h1V257h-1ZM641 281h1V287h-1ZM642 276h1V282h-1ZM643 273h1V278h-1ZM644 274h1V277h-1ZM645 274h1V276h-1ZM646 273h1V275h-1ZM647 272h1V277h-1ZM648 270h1V274h-1ZM649 271h1V273h-1ZM650 271h1V273h-1ZM655 273h1V278h-1ZM657 271h1V275h-1ZM659 271h1V275h-1ZM660 271h1V276h-1ZM661 270h1V272h-1ZM662 270h1V272h-1ZM663 269h1V271h-1ZM664 268h1V270h-1ZM668 274h1V276h-1ZM678 286h1V290h-1ZM679 280h1V288h-1ZM680 282h1V288h-1ZM682 282h1V284h-1ZM683 281h1V283h-1ZM686 282h1V286h-1ZM687 282h1V284h-1ZM688 278h1V286h-1ZM690 272h1V281h-1ZM691 276h1V279h-1ZM693 275h1V278h-1ZM694 273h1V276h-1ZM696 273h1V276h-1ZM697 271h1V274h-1ZM698 272h1V274h-1ZM699 271h1V273h-1ZM700 271h1V273h-1ZM702 271h1V273h-1ZM705 273h1V276h-1ZM707 276h1V281h-1ZM712 282h1V284h-1ZM716 285h1V291h-1ZM717 283h1V287h-1ZM718 281h1V284h-1ZM719 281h1V283h-1ZM724 290h1V293h-1ZM727 291h1V295h-1ZM728 287h1V292h-1ZM729 286h1V288h-1ZM742 323h1V329h-1ZM743 317h1V327h-1ZM744 311h1V319h-1ZM745 313h1V317h-1ZM746 313h1V318h-1ZM747 311h1V314h-1ZM751 314h1V322h-1ZM752 311h1V315h-1ZM753 310h1V312h-1ZM756 316h1V322h-1ZM757 311h1V317h-1ZM764 318h1V322h-1ZM768 326h1V332h-1ZM769 320h1V327h-1ZM770 316h1V321h-1ZM771 313h1V317h-1ZM775 314h1V316h-1ZM777 313h1V316h-1ZM778 312h1V314h-1ZM779 311h1V313h-1ZM781 310h1V315h-1ZM787 310h1V314h-1ZM788 311h1V313h-1ZM789 307h1V313h-1ZM790 308h1V313h-1ZM796 312h1V314h-1ZM797 310h1V313h-1ZM798 309h1V312h-1ZM799 307h1V311h-1ZM801 306h1V313h-1ZM802 306h1V308h-1ZM803 305h1V307h-1ZM804 303h1V307h-1ZM805 301h1V306h-1ZM806 302h1V304h-1ZM808 299h1V306h-1ZM810 299h1V301h-1ZM811 297h1V300h-1ZM812 296h1V299h-1ZM814 295h1V299h-1ZM815 293h1V296h-1ZM816 290h1V294h-1ZM817 291h1V293h-1ZM818 291h1V293h-1ZM820 292h1V294h-1ZM823 294h1V297h-1ZM828 296h1V300h-1ZM830 296h1V299h-1ZM831 294h1V299h-1ZM832 291h1V295h-1ZM833 291h1V294h-1ZM835 291h1V294h-1ZM839 291h1V293h-1ZM841 292h1V294h-1ZM842 292h1V294h-1ZM843 291h1V297h-1ZM844 289h1V293h-1ZM845 288h1V290h-1ZM846 287h1V289h-1ZM851 290h1V292h-1ZM853 291h1V296h-1ZM858 299h1V303h-1ZM859 298h1V301h-1ZM860 297h1V299h-1ZM861 296h1V298h-1ZM866 297h1V299h-1ZM868 299h1V301h-1ZM872 301h1V307h-1ZM875 306h1V308h-1ZM876 304h1V307h-1ZM877 304h1V307h-1ZM879 302h1V308h-1ZM880 302h1V304h-1ZM882 300h1V304h-1ZM883 297h1V302h-1ZM884 300h1V302h-1ZM885 299h1V303h-1ZM886 294h1V300h-1ZM887 297h1V301h-1ZM888 296h1V298h-1ZM889 294h1V300h-1ZM893 297h1V299h-1ZM896 298h1V305h-1ZM902 308h1V310h-1ZM905 310h1V312h-1ZM907 310h1V312h-1ZM908 309h1V311h-1ZM909 308h1V310h-1ZM910 308h1V312h-1ZM911 306h1V309h-1ZM913 307h1V309h-1ZM914 305h1V309h-1ZM916 308h1V310h-1ZM918 308h1V310h-1ZM919 307h1V309h-1ZM921 307h1V310h-1ZM925 309h1V312h-1ZM927 307h1V312h-1ZM928 308h1V310h-1ZM929 303h1V313h-1ZM930 305h1V307h-1ZM931 302h1V306h-1ZM933 301h1V304h-1ZM934 302h1V304h-1ZM937 302h1V305h-1ZM939 302h1V304h-1ZM941 300h1V303h-1ZM942 301h1V303h-1ZM943 300h1V303h-1ZM945 300h1V302h-1ZM951 302h1V304h-1ZM952 302h1V304h-1ZM955 298h1V304h-1ZM956 301h1V305h-1ZM957 298h1V302h-1ZM958 298h1V300h-1ZM959 296h1V299h-1ZM960 297h1V299h-1ZM964 296h1V298h-1ZM967 296h1V299h-1ZM968 294h1V299h-1ZM969 288h1V295h-1ZM972 290h1V293h-1ZM973 290h1V292h-1ZM977 290h1V292h-1ZM979 290h1V292h-1ZM983 288h1V291h-1ZM985 288h1V291h-1ZM987 288h1V290h-1ZM989 289h1V291h-1ZM991 289h1V292h-1ZM992 287h1V290h-1ZM993 285h1V288h-1ZM994 285h1V289h-1ZM998 286h1V289h-1ZM1004 294h1V296h-1ZM1008 300h1V302h-1ZM1009 298h1V301h-1ZM1010 297h1V299h-1ZM1011 294h1V298h-1ZM1017 299h1V301h-1ZM1018 299h1V301h-1ZM1020 298h1V300h-1ZM1021 298h1V300h-1ZM1023 298h1V300h-1ZM1026 300h1V302h-1ZM1028 300h1V302h-1ZM1031 300h1V302h-1ZM1034 300h1V302h-1ZM1035 297h1V301h-1ZM1036 295h1V298h-1ZM1037 294h1V299h-1ZM1038 294h1V296h-1ZM1040 295h1V299h-1ZM1047 297h1V300h-1ZM1049 297h1V301h-1ZM1050 293h1V298h-1ZM1051 294h1V296h-1ZM1052 294h1V296h-1ZM1058 298h1V300h-1ZM1059 298h1V300h-1ZM1060 297h1V299h-1ZM1061 297h1V299h-1ZM1064 297h1V300h-1ZM1066 296h1V299h-1ZM1068 297h1V299h-1ZM1069 296h1V299h-1ZM1070 295h1V298h-1ZM1071 295h1V297h-1ZM1072 294h1V296h-1ZM1074 293h1V295h-1ZM1075 290h1V295h-1ZM1079 294h1V296h-1ZM1081 293h1V297h-1ZM1084 296h1V298h-1ZM1085 296h1V298h-1ZM1087 298h1V300h-1ZM1089 299h1V301h-1ZM1092 302h1V305h-1ZM1093 299h1V303h-1ZM1096 302h1V305h-1ZM1097 301h1V303h-1ZM1099 301h1V305h-1ZM1104 306h1V310h-1ZM1105 306h1V309h-1ZM1106 306h1V308h-1ZM1107 305h1V308h-1ZM1108 304h1V306h-1ZM1109 304h1V306h-1ZM1110 303h1V305h-1ZM1112 300h1V305h-1ZM1113 302h1V304h-1ZM1114 302h1V304h-1ZM1115 300h1V303h-1ZM1120 301h1V303h-1ZM1125 305h1V307h-1ZM1128 305h1V307h-1ZM1130 304h1V307h-1ZM1131 305h1V307h-1ZM1132 305h1V307h-1ZM1133 304h1V306h-1ZM1134 304h1V306h-1ZM1135 302h1V305h-1ZM1139 305h1V307h-1ZM1144 307h1V310h-1ZM1145 308h1V310h-1ZM1146 308h1V310h-1ZM1147 308h1V310h-1ZM1149 307h1V309h-1ZM1150 306h1V308h-1ZM1151 306h1V308h-1ZM1152 305h1V307h-1ZM1154 306h1V308h-1ZM1155 305h1V308h-1ZM1158 307h1V309h-1ZM1159 306h1V308h-1ZM1163 307h1V310h-1ZM1164 307h1V310h-1ZM1165 307h1V309h-1ZM1167 306h1V309h-1ZM1169 297h1V308h-1ZM1170 299h1V308h-1ZM1172 293h1V302h-1ZM1174 298h1V301h-1ZM1176 299h1V301h-1ZM1178 299h1V301h-1ZM1179 298h1V302h-1ZM1180 298h1V301h-1ZM1181 297h1V300h-1ZM1182 295h1V298h-1ZM1183 295h1V301h-1ZM1184 294h1V297h-1ZM1185 293h1V295h-1ZM1188 292h1V295h-1ZM1190 294h1V296h-1ZM1192 294h1V296h-1ZM1196 295h1V297h-1ZM1200 296h1V298h-1ZM1201 296h1V298h-1ZM1202 295h1V298h-1ZM1204 295h1V298h-1ZM1205 296h1V298h-1ZM1207 295h1V297h-1ZM1208 294h1V296h-1ZM1209 294h1V297h-1ZM1210 292h1V297h-1ZM1211 293h1V295h-1ZM1212 293h1V295h-1ZM1213 291h1V294h-1ZM1214 290h1V294h-1ZM1219 292h1V296h-1ZM1222 293h1V295h-1ZM1223 293h1V295h-1ZM1227 293h1V295h-1Z" fill="#119a4a" shape-rendering="crispEdges"/>
<line x1="14" y1="294.5" x2="1333" y2="294.5" stroke="#f4661d" stroke-width="1.2"/>
</g>
<line x1="14" y1="354.5" x2="1333.5" y2="354.5" stroke="#c8c8c8" stroke-width="1"/>
<line x1="1333.5" y1="162" x2="1333.5" y2="355" stroke="#c8c8c8" stroke-width="1"/>
<line x1="75.5" y1="355" x2="75.5" y2="358" stroke="#c8c8c8" stroke-width="1.4"/>
<line x1="203.5" y1="355" x2="203.5" y2="358" stroke="#c8c8c8" stroke-width="1.4"/>
<line x1="331.5" y1="355" x2="331.5" y2="358" stroke="#c8c8c8" stroke-width="1.4"/>
<line x1="459.5" y1="355" x2="459.5" y2="358" stroke="#c8c8c8" stroke-width="1.4"/>
<line x1="587.5" y1="355" x2="587.5" y2="358" stroke="#c8c8c8" stroke-width="1.4"/>
<line x1="715.5" y1="355" x2="715.5" y2="358" stroke="#c8c8c8" stroke-width="1.4"/>
<line x1="843.5" y1="355" x2="843.5" y2="358" stroke="#c8c8c8" stroke-width="1.4"/>
<line x1="971.5" y1="355" x2="971.5" y2="358" stroke="#c8c8c8" stroke-width="1.4"/>
<line x1="1099.5" y1="355" x2="1099.5" y2="358" stroke="#c8c8c8" stroke-width="1.4"/>
<line x1="1227.5" y1="355" x2="1227.5" y2="358" stroke="#c8c8c8" stroke-width="1.4"/>
<line x1="1333" y1="211.5" x2="1337" y2="211.5" stroke="#c8c8c8" stroke-width="1"/>
<line x1="1333" y1="255.5" x2="1337" y2="255.5" stroke="#c8c8c8" stroke-width="1"/>
<line x1="1333" y1="299.5" x2="1337" y2="299.5" stroke="#c8c8c8" stroke-width="1"/>
<line x1="1333" y1="344.5" x2="1337" y2="344.5" stroke="#c8c8c8" stroke-width="1"/>
<path d="M1202 344.5 H1219.8 L1225.5 338.6 L1231.3 344.5 H1240 Q1243 344.5 1243 347.5 V356.5 Q1243 359.5 1240 359.5 H1202 Q1198.5 359.5 1198.5 356 V348 Q1198.5 344.5 1202 344.5 Z" fill="#000" stroke="#cfcfcf" stroke-width="1.3"/>
<rect x="1202" y="348" width="1" height="1" fill="#d8d8d8" shape-rendering="crispEdges"/><rect x="1204" y="348" width="1" height="1" fill="#d8d8d8" shape-rendering="crispEdges"/>
<rect x="1202" y="350" width="1" height="1" fill="#d8d8d8" shape-rendering="crispEdges"/><rect x="1204" y="350" width="1" height="1" fill="#d8d8d8" shape-rendering="crispEdges"/>
<rect x="1202" y="352" width="1" height="1" fill="#d8d8d8" shape-rendering="crispEdges"/><rect x="1204" y="352" width="1" height="1" fill="#d8d8d8" shape-rendering="crispEdges"/>
<rect x="1202" y="354" width="1" height="1" fill="#d8d8d8" shape-rendering="crispEdges"/><rect x="1204" y="354" width="1" height="1" fill="#d8d8d8" shape-rendering="crispEdges"/>
<rect x="1202" y="356" width="1" height="1" fill="#d8d8d8" shape-rendering="crispEdges"/><rect x="1204" y="356" width="1" height="1" fill="#d8d8d8" shape-rendering="crispEdges"/>
<path d="M1313.5 174.5 H1319.5 V218.5 H1313.5" fill="none" stroke="#bdbdbd" stroke-width="1"/>
</svg>
<div class="xl" style="left:26px">3 Mar 03:45</div>
<div class="xl" style="left:154px">3 Mar 05:53</div>
<div class="xl" style="left:282px">3 Mar 08:01</div>
<div class="xl" style="left:410px">3 Mar 10:09</div>
<div class="xl" style="left:538px">3 Mar 12:17</div>
<div class="xl" style="left:666px">3 Mar 14:25</div>
<div class="xl" style="left:794px">3 Mar 16:33</div>
<div class="xl" style="left:922px">3 Mar 18:41</div>
<div class="xl" style="left:1050px">3 Mar 20:49</div>
<div class="xl" style="left:1178px">4 Mar 00:00</div>
<div class="yl" style="top:206px">4600.00</div>
<div class="yl" style="top:250px">4500.00</div>
<div class="yl" style="top:295px">4400.00</div>
<div class="yl" style="top:339px">4300.00</div>
<svg class="a" style="left:1320px;top:280px" width="70" height="30"><path d="M4 14 L10 6 H62 Q64 6 64 8 V20 Q64 22 62 22 H10 Z" fill="#f4661d"/></svg>
<div class="a" style="left:1332px;top:287px;font-size:12.5px;color:#fff">4413.67</div>
<svg class="a" style="left:1300px;top:176px" width="20" height="40"><g fill="none" stroke="#cfcfcf" stroke-width="1"><rect x="5.5" y="18.5" width="9" height="5" rx="1"/><rect x="5.5" y="25.5" width="9" height="5" rx="1"/><line x1="5.5" y1="34.5" x2="14.5" y2="34.5"/><line x1="5.5" y1="34.5" x2="7" y2="36"/></g><rect x="14" y="6" width="1.2" height="1.2" fill="#cfcfcf"/><rect x="14" y="10" width="1.2" height="1.2" fill="#cfcfcf"/><rect x="14" y="14" width="1.2" height="1.2" fill="#cfcfcf"/></svg>
<div class="a" style="left:610px;top:168px;width:164px;height:24px;background:#1f1f1f;border-radius:4px"></div>
<div class="a" style="left:617px;top:172px;font-weight:bold;color:#2bb52b;letter-spacing:0.2px">+115 390.65 $ (+115%)</div>
<svg class="a" style="left:12px;top:380px" width="10" height="11"><path d="M0.5 5.5 L8.5 1 L8.5 10 Z" fill="#8a8a8a"/></svg>
<div class="a" style="left:1371px;top:381px;width:10px;height:9px;border-radius:5px;background:#8a8a8a"></div>
<svg class="a" style="left:1382px;top:380px" width="10" height="11"><path d="M9 5.5 L1 1 L1 10 Z" fill="#8a8a8a"/></svg>
<div class="a" style="left:1402px;top:55px;width:38px;height:325px;background:#565656;border-radius:5px"></div>
<svg class="a" style="left:1400px;top:55px" width="46" height="330">
<rect x="12" y="6" width="1" height="1" fill="#b8b8b8" shape-rendering="crispEdges"/>
<rect x="14" y="6" width="1" height="1" fill="#b8b8b8" shape-rendering="crispEdges"/>
<rect x="16" y="6" width="1" height="1" fill="#b8b8b8" shape-rendering="crispEdges"/>
<rect x="18" y="6" width="1" height="1" fill="#b8b8b8" shape-rendering="crispEdges"/>
<rect x="20" y="6" width="1" height="1" fill="#b8b8b8" shape-rendering="crispEdges"/>
<rect x="22" y="6" width="1" height="1" fill="#b8b8b8" shape-rendering="crispEdges"/>
<rect x="24" y="6" width="1" height="1" fill="#b8b8b8" shape-rendering="crispEdges"/>
<rect x="26" y="6" width="1" height="1" fill="#b8b8b8" shape-rendering="crispEdges"/>
<rect x="28" y="6" width="1" height="1" fill="#b8b8b8" shape-rendering="crispEdges"/>
<rect x="30" y="6" width="1" height="1" fill="#b8b8b8" shape-rendering="crispEdges"/>
<rect x="12" y="8" width="1" height="1" fill="#b8b8b8" shape-rendering="crispEdges"/>
<rect x="14" y="8" width="1" height="1" fill="#b8b8b8" shape-rendering="crispEdges"/>
<rect x="16" y="8" width="1" height="1" fill="#b8b8b8" shape-rendering="crispEdges"/>
<rect x="18" y="8" width="1" height="1" fill="#b8b8b8" shape-rendering="crispEdges"/>
<rect x="20" y="8" width="1" height="1" fill="#b8b8b8" shape-rendering="crispEdges"/>
<rect x="22" y="8" width="1" height="1" fill="#b8b8b8" shape-rendering="crispEdges"/>
<rect x="24" y="8" width="1" height="1" fill="#b8b8b8" shape-rendering="crispEdges"/>
<rect x="26" y="8" width="1" height="1" fill="#b8b8b8" shape-rendering="crispEdges"/>
<rect x="28" y="8" width="1" height="1" fill="#b8b8b8" shape-rendering="crispEdges"/>
<rect x="30" y="8" width="1" height="1" fill="#b8b8b8" shape-rendering="crispEdges"/>
<rect x="8" y="13" width="24" height="24" rx="4" fill="#2a2a2a"/>
<path d="M17.5 19 L17.5 31 L20.3 28.5 L22.5 33 L24.3 32 L22.2 27.6 L25.8 27.3 Z" fill="#fff"/>
<g stroke="#c8c8c8" stroke-width="1.7"><line x1="13" y1="55.6" x2="18.3" y2="55.6"/><line x1="21.3" y1="55.6" x2="27" y2="55.6"/><line x1="19.8" y1="48.6" x2="19.8" y2="54.1"/><line x1="19.8" y1="57.1" x2="19.8" y2="62.8"/><rect x="19.3" y="55.1" width="1" height="1" fill="#c8c8c8" stroke="none"/></g>
<g stroke="#c8c8c8" stroke-width="1.3"><line x1="14" y1="85.5" x2="16.799999999999955" y2="85.5"/><line x1="20.90000000000009" y1="85.5" x2="21.90000000000009" y2="85.5"/><line x1="23.299999999999955" y1="85.5" x2="28.200000000000045" y2="85.5"/><line x1="21.40000000000009" y1="78.69999999999999" x2="21.40000000000009" y2="83.5"/><line x1="21.40000000000009" y1="85" x2="21.40000000000009" y2="86"/><line x1="21.40000000000009" y1="89.80000000000001" x2="21.40000000000009" y2="92.80000000000001"/><line x1="11.900000000000091" y1="88.30000000000001" x2="16.799999999999955" y2="88.30000000000001"/><line x1="18.200000000000045" y1="88.30000000000001" x2="19.200000000000045" y2="88.30000000000001"/><line x1="21" y1="88.30000000000001" x2="25.700000000000045" y2="88.30000000000001"/><line x1="18.700000000000045" y1="81" x2="18.700000000000045" y2="86"/><line x1="18.700000000000045" y1="87.80000000000001" x2="18.700000000000045" y2="88.80000000000001"/><line x1="18.700000000000045" y1="90.4" x2="18.700000000000045" y2="95"/></g>
<g stroke="#c8c8c8" stroke-width="1.7" fill="none"><line x1="13.1" y1="118.1" x2="17.9" y2="118.1"/><line x1="20" y1="110.9" x2="20" y2="115.7"/><rect x="20" y="117.2" width="6.6" height="6.8"/></g>
<line x1="5" y1="133.5" x2="34" y2="133.5" stroke="#6a6a6a" stroke-width="1"/>
<line x1="20" y1="141" x2="20" y2="158" stroke="#c8c8c8" stroke-width="1.8"/><path d="M8.5 156.8 L12.4 160.6 L8.5 160.6 Z" fill="#e0e0e0"/>
<g fill="none" stroke="#c8c8c8" stroke-width="1.2" stroke-linejoin="round"><path d="M13.3 173.3 C16.5 174.5 17 177.5 15 180 C13 182 12.3 183.5 12.5 185.5"/><path d="M14.3 189.6 L15.3 185.5 L24.5 176.3 L27.8 179.5 L18.6 188.6 Z"/><line x1="21.6" y1="179.2" x2="24.8" y2="182.4"/></g>
<g stroke="#c8c8c8" stroke-width="1.2" stroke-linecap="round"><line x1="12.3" y1="214.3" x2="22.5" y2="204.3"/><line x1="18.3" y1="220.6" x2="23.5" y2="216"/><line x1="26.3" y1="212.8" x2="28.8" y2="210.3"/><line x1="16.5" y1="213.5" x2="16.5" y2="219.3"/><line x1="18.9" y1="211" x2="18.9" y2="216.3" stroke-width="1.6" stroke="#a8a8a8"/><line x1="21.7" y1="208.5" x2="21.7" y2="214.3"/><line x1="24.4" y1="205.5" x2="24.4" y2="211.3"/></g>
<path d="M25.3 214.8 H28.8 V216 H26.6 V217.3 H28.3 V218.4 H26.6 V219.7 H28.8 V220.8 H25.3 Z" fill="#c8c8c8"/><rect x="26.5" y="213.3" width="1.4" height="0.8" fill="#c8c8c8"/>
<g stroke="#c8c8c8" stroke-width="1.3" fill="none" stroke-linecap="round"><line x1="12.3" y1="250" x2="24.7" y2="238"/><line x1="15.3" y1="241.5" x2="20.8" y2="247"/><line x1="15.3" y1="241.5" x2="22" y2="235.3"/><line x1="20.8" y1="247" x2="27.3" y2="240.5"/></g>
<rect x="11.6" y="265.7" width="1.6" height="1.2" fill="#c8c8c8"/>
<rect x="15.2" y="265.7" width="1.6" height="1.2" fill="#c8c8c8"/>
<rect x="19.1" y="265.7" width="1.6" height="1.2" fill="#c8c8c8"/>
<rect x="23.2" y="265.7" width="1.6" height="1.2" fill="#c8c8c8"/>
<rect x="26.8" y="265.7" width="1.6" height="1.2" fill="#c8c8c8"/>
<rect x="11.6" y="270.8" width="1.6" height="1.2" fill="#c8c8c8"/>
<rect x="15.2" y="270.8" width="1.6" height="1.2" fill="#c8c8c8"/>
<rect x="19.1" y="270.8" width="1.6" height="1.2" fill="#c8c8c8"/>
<rect x="23.2" y="270.8" width="1.6" height="1.2" fill="#c8c8c8"/>
<rect x="26.8" y="270.8" width="1.6" height="1.2" fill="#c8c8c8"/>
<rect x="11.6" y="276.0" width="1.6" height="1.2" fill="#c8c8c8"/>
<rect x="15.2" y="276.0" width="1.6" height="1.2" fill="#c8c8c8"/>
<rect x="19.1" y="276.0" width="1.6" height="1.2" fill="#c8c8c8"/>
<rect x="11.6" y="281.0" width="1.6" height="1.2" fill="#c8c8c8"/>
<rect x="15.2" y="281.0" width="1.6" height="1.2" fill="#c8c8c8"/>
<rect x="19.1" y="281.0" width="1.6" height="1.2" fill="#c8c8c8"/>
<path d="M24.4 276.1 H28.1 V277.4 H25.9 V278.8 H27.3 V280 H25.9 V282.1 H24.4 Z" fill="#c8c8c8"/>
<path d="M8.9 281 L12.5 285 L8.9 285 Z" fill="#e8e8e8"/>
<line x1="5" y1="288.5" x2="34" y2="288.5" stroke="#6a6a6a" stroke-width="1"/>
<circle cx="14.7" cy="307" r="2.1" fill="#fff"/>
<circle cx="21" cy="307" r="2.1" fill="#fff"/>
<circle cx="27.3" cy="307" r="2.1" fill="#fff"/>
</svg>
<div class="a" style="left:7px;top:405px;width:312px;height:563px;background:#565656;border-radius:5px"></div>
<svg class="a" style="left:12px;top:410px" width="6" height="26" shape-rendering="crispEdges"><rect x="1" y="1" width="1" height="1" fill="#dcdcdc"/><rect x="3" y="1" width="1" height="1" fill="#dcdcdc"/><rect x="1" y="3" width="1" height="1" fill="#dcdcdc"/><rect x="3" y="3" width="1" height="1" fill="#dcdcdc"/><rect x="1" y="5" width="1" height="1" fill="#dcdcdc"/><rect x="3" y="5" width="1" height="1" fill="#dcdcdc"/><rect x="1" y="7" width="1" height="1" fill="#dcdcdc"/><rect x="3" y="7" width="1" height="1" fill="#dcdcdc"/><rect x="1" y="9" width="1" height="1" fill="#dcdcdc"/><rect x="3" y="9" width="1" height="1" fill="#dcdcdc"/><rect x="1" y="11" width="1" height="1" fill="#dcdcdc"/><rect x="3" y="11" width="1" height="1" fill="#dcdcdc"/><rect x="1" y="13" width="1" height="1" fill="#dcdcdc"/><rect x="3" y="13" width="1" height="1" fill="#dcdcdc"/><rect x="1" y="15" width="1" height="1" fill="#dcdcdc"/><rect x="3" y="15" width="1" height="1" fill="#dcdcdc"/><rect x="1" y="17" width="1" height="1" fill="#dcdcdc"/><rect x="3" y="17" width="1" height="1" fill="#dcdcdc"/><rect x="1" y="19" width="1" height="1" fill="#dcdcdc"/><rect x="3" y="19" width="1" height="1" fill="#dcdcdc"/><rect x="1" y="21" width="1" height="1" fill="#dcdcdc"/><rect x="3" y="21" width="1" height="1" fill="#dcdcdc"/><rect x="1" y="23" width="1" height="1" fill="#dcdcdc"/><rect x="3" y="23" width="1" height="1" fill="#dcdcdc"/></svg>
<div class="a" style="left:26px;top:415px;color:#cfcfcf">Parameters</div>
<svg class="a" style="left:263px;top:417px" width="17" height="13"><path d="M1 11.5 V1.5 H12 V4" fill="none" stroke="#c8c8c8" stroke-width="1.4"/><path d="M1 12 L4 5.5 H16 L13 12 Z" fill="#c8c8c8"/></svg>
<svg class="a" style="left:294px;top:416px" width="15" height="14"><rect x="0.75" y="0.75" width="13" height="12.5" rx="1.5" fill="none" stroke="#c8c8c8" stroke-width="1.5"/>
<rect x="3.5" y="0.5" width="7" height="3.5" fill="#c8c8c8"/><line x1="3" y1="7.5" x2="11.5" y2="7.5" stroke="#c8c8c8" stroke-width="1.3"/><line x1="3" y1="10.2" x2="11.5" y2="10.2" stroke="#c8c8c8" stroke-width="1.3"/></svg>
<div class="a" style="left:13px;top:441px;width:300px;height:520px;background:#2a2a2a;border-radius:5px"></div>
<div class="a" style="left:25px;top:451px;width:261px;height:1px;background:#6a6a6a"></div>
<div class="a" style="left:25px;top:944px;width:261px;height:1px;background:#6a6a6a"></div>
<div class="a" style="left:13px;top:455px;width:280px;height:485px;overflow:hidden">
<div class="pl" style="left:18px;top:-1px">Tokio</div>
<div class="pb" style="left:121px;top:-5px"></div>
<div class="a" style="left:129px;top:-1px">Yes</div>
<div class="dd" style="left:255px;top:4px"></div>
<div class="pl" style="left:18px;top:29px">Tokio Begins</div>
<div class="pb" style="left:121px;top:25px"></div>
<div class="a" style="left:127px;top:29px">23:30</div>
<div class="pl" style="left:18px;top:59px">Tokio Ends</div>
<div class="pb" style="left:121px;top:55px"></div>
<div class="a" style="left:127px;top:59px">07:30</div>
<div class="pl" style="left:18px;top:89px">Sydney (21:…</div>
<div class="pb" style="left:121px;top:85px"></div>
<div class="a" style="left:129px;top:89px">Yes</div>
<div class="dd" style="left:255px;top:94px"></div>
<div class="pl" style="left:18px;top:119px">Sydney Begi…</div>
<div class="pb" style="left:121px;top:115px"></div>
<div class="a" style="left:127px;top:119px">21:30</div>
<div class="pl" style="left:18px;top:149px">Sydney Ends…</div>
<div class="pb" style="left:121px;top:145px"></div>
<div class="a" style="left:127px;top:149px">05:30</div>
<div class="pl" style="left:18px;top:179px">Frankfurt (06…</div>
<div class="pb" style="left:121px;top:175px"></div>
<div class="a" style="left:129px;top:179px">Yes</div>
<div class="dd" style="left:255px;top:184px"></div>
<div class="pl" style="left:18px;top:209px">Frankfurt Be…</div>
<div class="pb" style="left:121px;top:205px"></div>
<div class="a" style="left:127px;top:209px">06:30</div>
<div class="pl" style="left:18px;top:239px">Frankfurt En…</div>
<div class="pb" style="left:121px;top:235px"></div>
<div class="a" style="left:127px;top:239px">14:30</div>
<div class="pl" style="left:18px;top:269px">Use RSI Con…</div>
<div class="pb" style="left:121px;top:265px"></div>
<div class="a" style="left:129px;top:269px">Yes</div>
<div class="dd" style="left:255px;top:274px"></div>
<div class="pl" style="left:18px;top:299px">RSI Period</div>
<div class="pb" style="left:121px;top:295px"></div>
<div class="a" style="left:127px;top:299px">14</div>
<div class="su" style="left:255px;top:300px"></div><div class="sd" style="left:255px;top:308px"></div>
<div class="pl" style="left:18px;top:329px">RSI Overbou…</div>
<div class="pb" style="left:121px;top:325px"></div>
<div class="a" style="left:127px;top:329px">95</div>
<div class="su" style="left:255px;top:330px"></div><div class="sd" style="left:255px;top:338px"></div>
<div class="pl" style="left:18px;top:359px">RSI Oversold</div>
<div class="pb" style="left:121px;top:355px"></div>
<div class="a" style="left:127px;top:359px">10</div>
<div class="su" style="left:255px;top:360px"></div><div class="sd" style="left:255px;top:368px"></div>
<div class="pl" style="left:18px;top:389px">Use RSI >50…</div>
<div class="pb" style="left:121px;top:385px"></div>
<div class="a" style="left:129px;top:389px">Yes</div>
<div class="dd" style="left:255px;top:394px"></div>
<div class="pl" style="left:18px;top:419px">Use MACD C…</div>
<div class="pb" style="left:121px;top:415px"></div>
<div class="a" style="left:129px;top:419px">Yes</div>
<div class="dd" style="left:255px;top:424px"></div>
<div class="pl" style="left:18px;top:449px">MACD Fast</div>
<div class="pb" style="left:121px;top:445px"></div>
<div class="a" style="left:127px;top:449px">5</div>
<div class="su" style="left:255px;top:450px"></div><div class="sd" style="left:255px;top:458px"></div>
<div class="pl" style="left:18px;top:479px">MACD Slow</div>
<div class="pb" style="left:121px;top:475px"></div>
<div class="a" style="left:127px;top:479px">26</div>
<div class="su" style="left:255px;top:480px"></div><div class="sd" style="left:255px;top:488px"></div>
</div>
<div class="a" style="left:25px;top:452px;width:261px;height:4px;background:linear-gradient(#1e1e1e,rgba(30,30,30,0))"></div>
<svg class="a" style="left:291px;top:452px" width="11" height="10"><path d="M1 8.5 L5.5 1 L10 8.5 Z" fill="#8a8a8a"/></svg>
<div class="a" style="left:292px;top:686px;width:9px;height:119px;background:#8a8a8a;border-radius:4.5px"></div>
<svg class="a" style="left:291px;top:934px" width="11" height="10"><path d="M1 1.5 L5.5 9 L10 1.5 Z" fill="#8a8a8a"/></svg>
<div class="a" style="left:325px;top:405px;width:63px;height:30px;background:#3d3d3d;border-radius:5px 5px 0 0"></div>
<div class="a" style="left:325px;top:413px;width:63px;text-align:center;color:#e6e6e6">Equity</div>
<div class="a" style="left:394px;top:405px;width:110px;height:30px;background:#3d3d3d;border-radius:5px 5px 0 0"></div>
<div class="a" style="left:394px;top:413px;width:110px;text-align:center;color:#e6e6e6">Trade statistics</div>
<div class="a" style="left:510px;top:405px;width:100px;height:30px;background:#3d3d3d;border-radius:5px 5px 0 0"></div>
<div class="a" style="left:518px;top:412px;color:#e6e6e6">Positions</div>
<div class="a" style="left:580px;top:410px;width:20px;height:20px;background:#7a7a7a;border-radius:4px;text-align:center;line-height:20px;color:#fff">0</div>
<div class="a" style="left:616px;top:405px;width:87px;height:30px;background:#3d3d3d;border-radius:5px 5px 0 0"></div>
<div class="a" style="left:624px;top:412px;color:#e6e6e6">Orders</div>
<div class="a" style="left:673px;top:410px;width:20px;height:20px;background:#7a7a7a;border-radius:4px;text-align:center;line-height:20px;color:#fff">0</div>
<div class="a" style="left:709px;top:405px;width:62px;height:30px;background:#565656;border-radius:5px 5px 0 0"></div>
<div class="a" style="left:709px;top:413px;width:62px;text-align:center;color:#e6e6e6">History</div>
<div class="a" style="left:777px;top:405px;width:65px;height:30px;background:#3d3d3d;border-radius:5px 5px 0 0"></div>
<div class="a" style="left:777px;top:413px;width:65px;text-align:center;color:#e6e6e6">Events</div>
<div class="a" style="left:848px;top:405px;width:60px;height:30px;background:#3d3d3d;border-radius:5px 5px 0 0"></div>
<div class="a" style="left:848px;top:413px;width:60px;text-align:center;color:#e6e6e6">Logs</div>
<div class="a" style="left:325px;top:435px;width:1115px;height:533px;background:#565656;border-radius:0 5px 5px 5px"></div>
<div class="a" style="left:332px;top:442px;width:1102px;height:492px;background:#2a2a2a;border-radius:5px"></div>
<div class="th" style="left:347.5px;width:56.5px;overflow:hidden;text-overflow:clip">ID</div>
<div class="hs" style="left:400px"></div>
<div class="th" style="left:405.0px;width:76.2px;overflow:hidden;text-overflow:clip">Label</div>
<div class="hs" style="left:477px"></div>
<div class="th" style="left:482.2px;width:113.9px;overflow:hidden;text-overflow:clip">Entry time (UTC…</div>
<div class="hs" style="left:592px"></div>
<div class="th" style="left:597.1px;width:76.0px;overflow:hidden;text-overflow:clip">Symbol</div>
<div class="hs" style="left:669px"></div>
<div class="th" style="left:674.1px;width:44.8px;overflow:hidden;text-overflow:clip">Qua…</div>
<div class="hs" style="left:715px"></div>
<div class="th" style="left:719.9px;width:45.6px;overflow:hidden;text-overflow:clip">Volume</div>
<div class="hs" style="left:762px"></div>
<div class="th" style="left:766.5px;width:52.7px;overflow:hidden;text-overflow:clip">Type</div>
<div class="hs" style="left:815px"></div>
<div class="th" style="left:820.2px;width:74.9px;overflow:hidden;text-overflow:clip">Entry price</div>
<div class="hs" style="left:891px"></div>
<div class="th" style="left:896.1px;width:60.4px;overflow:hidden;text-overflow:clip">Commi…</div>
<div class="hs" style="left:953px"></div>
<div class="th" style="left:957.5px;width:59.9px;overflow:hidden;text-overflow:clip">Swap</div>
<div class="hs" style="left:1013px"></div>
<div class="th" style="left:1018.4px;width:75.8px;overflow:hidden;text-overflow:clip">Closing p…</div>
<div class="hs" style="left:1090px"></div>
<div class="th" style="left:1095.2px;width:114.0px;overflow:hidden;text-overflow:clip">Closing time (U…</div>
<div class="hs" style="left:1205px"></div>
<div class="th" style="left:1210.2px;width:76.3px;overflow:hidden;text-overflow:clip">Net</div>
<div class="hs" style="left:1283px"></div>
<div class="th" style="left:1287.5px;width:44.7px;overflow:hidden;text-overflow:clip">Pips</div>
<div class="hs" style="left:1328px"></div>
<div class="th" style="left:1333.2px;width:76.2px;overflow:hidden;text-overflow:clip">Gross</div>
<div class="hs" style="left:1405px"></div>
<div class="c" style="left:303.0px;top:478px;width:140px">2</div>
<div class="c" style="left:372.0px;top:478px;width:140px">EMA_RS…</div>
<div class="c" style="left:467.0px;top:478px;width:140px">23/01/2025 06:…</div>
<div class="c" style="left:565.0px;top:478px;width:140px">XAUEUR</div>
<div class="c" style="left:625.0px;top:478px;width:140px">0.9…</div>
<div class="c" style="left:672.0px;top:478px;width:140px">90 Oz</div>
<div class="c" style="left:722.0px;top:478px;width:140px">Sell</div>
<div class="c" style="left:786.0px;top:478px;width:140px">2644.69</div>
<div class="c" style="left:855.6px;top:478px;width:140px">-7.20</div>
<div class="c" style="left:916.0px;top:478px;width:140px">198.03</div>
<div class="c" style="left:985.0px;top:478px;width:140px">2689.78</div>
<div class="c" style="left:1080.0px;top:478px;width:140px">30/01/2025 20:…</div>
<div class="c o" style="left:1178.0px;top:478px;width:140px">-4 519.53</div>
<div class="c o" style="left:1238.6px;top:478px;width:140px">-4509</div>
<div class="c o" style="left:1301.0px;top:478px;width:140px">-4 710.36</div>
<div class="rl" style="top:500px"></div>
<div class="c" style="left:303.0px;top:509px;width:140px">4</div>
<div class="c" style="left:372.0px;top:509px;width:140px">EMA_RS…</div>
<div class="c" style="left:467.0px;top:509px;width:140px">31/01/2025 02:…</div>
<div class="c" style="left:565.0px;top:509px;width:140px">XAUEUR</div>
<div class="c" style="left:625.0px;top:509px;width:140px">0.9…</div>
<div class="c" style="left:672.0px;top:509px;width:140px">90 Oz</div>
<div class="c" style="left:722.0px;top:509px;width:140px">Buy</div>
<div class="c" style="left:786.0px;top:509px;width:140px">2691.04</div>
<div class="c" style="left:855.6px;top:509px;width:140px">-7.20</div>
<div class="c" style="left:916.0px;top:509px;width:140px">-274.23</div>
<div class="c" style="left:985.0px;top:509px;width:140px">2811.07</div>
<div class="c" style="left:1080.0px;top:509px;width:140px">10/02/2025 09:…</div>
<div class="c g" style="left:1178.0px;top:509px;width:140px">12 257.59</div>
<div class="c g" style="left:1238.6px;top:509px;width:140px">12003</div>
<div class="c g" style="left:1301.0px;top:509px;width:140px">12 539.02</div>
<div class="rl" style="top:531px"></div>
<div class="c" style="left:303.0px;top:540px;width:140px">6</div>
<div class="c" style="left:372.0px;top:540px;width:140px">EMA_RS…</div>
<div class="c" style="left:467.0px;top:540px;width:140px">26/02/2025 10:…</div>
<div class="c" style="left:565.0px;top:540px;width:140px">XAUEUR</div>
<div class="c" style="left:625.0px;top:540px;width:140px">0.9…</div>
<div class="c" style="left:672.0px;top:540px;width:140px">90 Oz</div>
<div class="c" style="left:722.0px;top:540px;width:140px">Buy</div>
<div class="c" style="left:786.0px;top:540px;width:140px">2776.71</div>
<div class="c" style="left:855.6px;top:540px;width:140px">-7.20</div>
<div class="c" style="left:916.0px;top:540px;width:140px">-137.11</div>
<div class="c" style="left:985.0px;top:540px;width:140px">2731.59</div>
<div class="c" style="left:1080.0px;top:540px;width:140px">28/02/2025 14:…</div>
<div class="c o" style="left:1178.0px;top:540px;width:140px">-4 857.80</div>
<div class="c o" style="left:1238.6px;top:540px;width:140px">-4512</div>
<div class="c o" style="left:1301.0px;top:540px;width:140px">-4 713.49</div>
<div class="rl" style="top:562px"></div>
<div class="c" style="left:303.0px;top:571px;width:140px">8</div>
<div class="c" style="left:372.0px;top:571px;width:140px">EMA_RS…</div>
<div class="c" style="left:467.0px;top:571px;width:140px">06/03/2025 00:…</div>
<div class="c" style="left:565.0px;top:571px;width:140px">XAUEUR</div>
<div class="c" style="left:625.0px;top:571px;width:140px">0.9…</div>
<div class="c" style="left:672.0px;top:571px;width:140px">90 Oz</div>
<div class="c" style="left:722.0px;top:571px;width:140px">Sell</div>
<div class="c" style="left:786.0px;top:571px;width:140px">2703.50</div>
<div class="c" style="left:855.6px;top:571px;width:140px">-7.20</div>
<div class="c" style="left:916.0px;top:571px;width:140px">198.03</div>
<div class="c" style="left:985.0px;top:571px;width:140px">2706.97</div>
<div class="c" style="left:1080.0px;top:571px;width:140px">13/03/2025 03:…</div>
<div class="c o" style="left:1178.0px;top:571px;width:140px">-171.67</div>
<div class="c o" style="left:1238.6px;top:571px;width:140px">-347</div>
<div class="c o" style="left:1301.0px;top:571px;width:140px">-362.50</div>
<div class="rl" style="top:593px"></div>
<div class="c" style="left:303.0px;top:602px;width:140px">10</div>
<div class="c" style="left:372.0px;top:602px;width:140px">EMA_RS…</div>
<div class="c" style="left:467.0px;top:602px;width:140px">13/03/2025 14:…</div>
<div class="c" style="left:565.0px;top:602px;width:140px">XAUEUR</div>
<div class="c" style="left:625.0px;top:602px;width:140px">0.9…</div>
<div class="c" style="left:672.0px;top:602px;width:140px">90 Oz</div>
<div class="c" style="left:722.0px;top:602px;width:140px">Buy</div>
<div class="c" style="left:786.0px;top:602px;width:140px">2719.38</div>
<div class="c" style="left:855.6px;top:602px;width:140px">-7.20</div>
<div class="c" style="left:916.0px;top:602px;width:140px">-514.18</div>
<div class="c" style="left:985.0px;top:602px;width:140px">2840.01</div>
<div class="c" style="left:1080.0px;top:602px;width:140px">28/03/2025 01:…</div>
<div class="c g" style="left:1178.0px;top:602px;width:140px">12 080.32</div>
<div class="c g" style="left:1238.6px;top:602px;width:140px">12063</div>
<div class="c g" style="left:1301.0px;top:602px;width:140px">12 601.70</div>
<div class="rl" style="top:624px"></div>
<div class="c" style="left:303.0px;top:633px;width:140px">12</div>
<div class="c" style="left:372.0px;top:633px;width:140px">EMA_RS…</div>
<div class="c" style="left:467.0px;top:633px;width:140px">16/04/2025 12:…</div>
<div class="c" style="left:565.0px;top:633px;width:140px">XAUEUR</div>
<div class="c" style="left:625.0px;top:633px;width:140px">0.9…</div>
<div class="c" style="left:672.0px;top:633px;width:140px">90 Oz</div>
<div class="c" style="left:722.0px;top:633px;width:140px">Buy</div>
<div class="c" style="left:786.0px;top:633px;width:140px">2911.49</div>
<div class="c" style="left:855.6px;top:633px;width:140px">-7.20</div>
<div class="c" style="left:916.0px;top:633px;width:140px">-205.67</div>
<div class="c" style="left:985.0px;top:633px;width:140px">3033.40</div>
<div class="c" style="left:1080.0px;top:633px;width:140px">22/04/2025 06:…</div>
<div class="c g" style="left:1178.0px;top:633px;width:140px">12 522.54</div>
<div class="c g" style="left:1238.6px;top:633px;width:140px">12191</div>
<div class="c g" style="left:1301.0px;top:633px;width:140px">12 735.41</div>
<div class="rl" style="top:655px"></div>
<div class="c" style="left:303.0px;top:664px;width:140px">14</div>
<div class="c" style="left:372.0px;top:664px;width:140px">EMA_RS…</div>
<div class="c" style="left:467.0px;top:664px;width:140px">06/05/2025 03:…</div>
<div class="c" style="left:565.0px;top:664px;width:140px">XAUEUR</div>
<div class="c" style="left:625.0px;top:664px;width:140px">0.9…</div>
<div class="c" style="left:672.0px;top:664px;width:140px">90 Oz</div>
<div class="c" style="left:722.0px;top:664px;width:140px">Buy</div>
<div class="c" style="left:786.0px;top:664px;width:140px">2974.19</div>
<div class="c" style="left:855.6px;top:664px;width:140px">-7.20</div>
<div class="c" style="left:916.0px;top:664px;width:140px">-34.28</div>
<div class="c" style="left:985.0px;top:664px;width:140px">2968.21</div>
<div class="c" style="left:1080.0px;top:664px;width:140px">07/05/2025 00:…</div>
<div class="c o" style="left:1178.0px;top:664px;width:140px">-666.18</div>
<div class="c o" style="left:1238.6px;top:664px;width:140px">-598</div>
<div class="c o" style="left:1301.0px;top:664px;width:140px">-624.70</div>
<div class="rl" style="top:686px"></div>
<div class="c" style="left:303.0px;top:695px;width:140px">16</div>
<div class="c" style="left:372.0px;top:695px;width:140px">EMA_RS…</div>
<div class="c" style="left:467.0px;top:695px;width:140px">08/05/2025 08:…</div>
<div class="c" style="left:565.0px;top:695px;width:140px">XAUEUR</div>
<div class="c" style="left:625.0px;top:695px;width:140px">0.9…</div>
<div class="c" style="left:672.0px;top:695px;width:140px">90 Oz</div>
<div class="c" style="left:722.0px;top:695px;width:140px">Sell</div>
<div class="c" style="left:786.0px;top:695px;width:140px">2958.78</div>
<div class="c" style="left:855.6px;top:695px;width:140px">-7.20</div>
<div class="c" style="left:916.0px;top:695px;width:140px">113.16</div>
<div class="c" style="left:985.0px;top:695px;width:140px">2837.49</div>
<div class="c" style="left:1080.0px;top:695px;width:140px">14/05/2025 12:…</div>
<div class="c g" style="left:1178.0px;top:695px;width:140px">12 776.60</div>
<div class="c g" style="left:1238.6px;top:695px;width:140px">12129</div>
<div class="c g" style="left:1301.0px;top:695px;width:140px">12 670.64</div>
<div class="rl" style="top:717px"></div>
<div class="c" style="left:303.0px;top:726px;width:140px">18</div>
<div class="c" style="left:372.0px;top:726px;width:140px">EMA_RS…</div>
<div class="c" style="left:467.0px;top:726px;width:140px">23/05/2025 01:…</div>
<div class="c" style="left:565.0px;top:726px;width:140px">XAUEUR</div>
<div class="c" style="left:625.0px;top:726px;width:140px">0.9…</div>
<div class="c" style="left:672.0px;top:726px;width:140px">90 Oz</div>
<div class="c" style="left:722.0px;top:726px;width:140px">Buy</div>
<div class="c" style="left:786.0px;top:726px;width:140px">2922.93</div>
<div class="c" style="left:855.6px;top:726px;width:140px">-7.20</div>
<div class="c" style="left:916.0px;top:726px;width:140px">-445.62</div>
<div class="c" style="left:985.0px;top:726px;width:140px">2926.85</div>
<div class="c" style="left:1080.0px;top:726px;width:140px">05/06/2025 15:…</div>
<div class="c o" style="left:1178.0px;top:726px;width:140px">-43.30</div>
<div class="c g" style="left:1238.6px;top:726px;width:140px">392</div>
<div class="c g" style="left:1301.0px;top:726px;width:140px">409.51</div>
<div class="rl" style="top:748px"></div>
<div class="c" style="left:303.0px;top:757px;width:140px">20</div>
<div class="c" style="left:372.0px;top:757px;width:140px">EMA_RS…</div>
<div class="c" style="left:467.0px;top:757px;width:140px">16/06/2025 11:…</div>
<div class="c" style="left:565.0px;top:757px;width:140px">XAUEUR</div>
<div class="c" style="left:625.0px;top:757px;width:140px">0.9…</div>
<div class="c" style="left:672.0px;top:757px;width:140px">90 Oz</div>
<div class="c" style="left:722.0px;top:757px;width:140px">Sell</div>
<div class="c" style="left:786.0px;top:757px;width:140px">2953.02</div>
<div class="c" style="left:855.6px;top:757px;width:140px">-7.20</div>
<div class="c" style="left:916.0px;top:757px;width:140px">339.48</div>
<div class="c" style="left:985.0px;top:757px;width:140px">2832.45</div>
<div class="c" style="left:1080.0px;top:757px;width:140px">26/06/2025 13:…</div>
<div class="c g" style="left:1178.0px;top:757px;width:140px">12 927.71</div>
<div class="c g" style="left:1238.6px;top:757px;width:140px">12057</div>
<div class="c g" style="left:1301.0px;top:757px;width:140px">12 595.43</div>
<div class="rl" style="top:779px"></div>
<div class="c" style="left:303.0px;top:788px;width:140px">22</div>
<div class="c" style="left:372.0px;top:788px;width:140px">EMA_RS…</div>
<div class="c" style="left:467.0px;top:788px;width:140px">24/07/2025 04:…</div>
<div class="c" style="left:565.0px;top:788px;width:140px">XAUEUR</div>
<div class="c" style="left:625.0px;top:788px;width:140px">0.9…</div>
<div class="c" style="left:672.0px;top:788px;width:140px">90 Oz</div>
<div class="c" style="left:722.0px;top:788px;width:140px">Sell</div>
<div class="c" style="left:786.0px;top:788px;width:140px">2872.92</div>
<div class="c" style="left:855.6px;top:788px;width:140px">-7.20</div>
<div class="c" style="left:916.0px;top:788px;width:140px">84.87</div>
<div class="c" style="left:985.0px;top:788px;width:140px">2874.34</div>
<div class="c" style="left:1080.0px;top:788px;width:140px">29/07/2025 06:…</div>
<div class="c o" style="left:1178.0px;top:788px;width:140px">-70.67</div>
<div class="c o" style="left:1238.6px;top:788px;width:140px">-142</div>
<div class="c o" style="left:1301.0px;top:788px;width:140px">-148.34</div>
<div class="rl" style="top:810px"></div>
<div class="c" style="left:303.0px;top:819px;width:140px">24</div>
<div class="c" style="left:372.0px;top:819px;width:140px">EMA_RS…</div>
<div class="c" style="left:467.0px;top:819px;width:140px">14/08/2025 01:…</div>
<div class="c" style="left:565.0px;top:819px;width:140px">XAUEUR</div>
<div class="c" style="left:625.0px;top:819px;width:140px">0.9…</div>
<div class="c" style="left:672.0px;top:819px;width:140px">90 Oz</div>
<div class="c" style="left:722.0px;top:819px;width:140px">Buy</div>
<div class="c" style="left:786.0px;top:819px;width:140px">2875.29</div>
<div class="c" style="left:855.6px;top:819px;width:140px">-7.20</div>
<div class="c" style="left:916.0px;top:819px;width:140px">-582.74</div>
<div class="c" style="left:985.0px;top:819px;width:140px">2996.36</div>
<div class="c" style="left:1080.0px;top:819px;width:140px">02/09/2025 01:…</div>
<div class="c g" style="left:1178.0px;top:819px;width:140px">12 057.72</div>
<div class="c g" style="left:1238.6px;top:819px;width:140px">12107</div>
<div class="c g" style="left:1301.0px;top:819px;width:140px">12 647.66</div>
<div class="rl" style="top:841px"></div>
<div class="c" style="left:303.0px;top:850px;width:140px">26</div>
<div class="c" style="left:372.0px;top:850px;width:140px">EMA_RS…</div>
<div class="c" style="left:467.0px;top:850px;width:140px">07/10/2025 02:…</div>
<div class="c" style="left:565.0px;top:850px;width:140px">XAUEUR</div>
<div class="c" style="left:625.0px;top:850px;width:140px">0.9…</div>
<div class="c" style="left:672.0px;top:850px;width:140px">90 Oz</div>
<div class="c" style="left:722.0px;top:850px;width:140px">Buy</div>
<div class="c" style="left:786.0px;top:850px;width:140px">3384.00</div>
<div class="c" style="left:855.6px;top:850px;width:140px">-7.20</div>
<div class="c" style="left:916.0px;top:850px;width:140px">-137.11</div>
<div class="c" style="left:985.0px;top:850px;width:140px">3448.90</div>
<div class="c" style="left:1080.0px;top:850px;width:140px">08/10/2025 23:…</div>
<div class="c g" style="left:1178.0px;top:850px;width:140px">6 635.51</div>
<div class="c g" style="left:1238.6px;top:850px;width:140px">6490</div>
<div class="c g" style="left:1301.0px;top:850px;width:140px">6 779.82</div>
<div class="rl" style="top:872px"></div>
<div class="c" style="left:303.0px;top:881px;width:140px">28</div>
<div class="c" style="left:372.0px;top:881px;width:140px">EMA_RS…</div>
<div class="c" style="left:467.0px;top:881px;width:140px">10/10/2025 11:…</div>
<div class="c" style="left:565.0px;top:881px;width:140px">XAUEUR</div>
<div class="c" style="left:625.0px;top:881px;width:140px">0.9…</div>
<div class="c" style="left:672.0px;top:881px;width:140px">90 Oz</div>
<div class="c" style="left:722.0px;top:881px;width:140px">Buy</div>
<div class="c" style="left:786.0px;top:881px;width:140px">3454.71</div>
<div class="c" style="left:855.6px;top:881px;width:140px">-7.20</div>
<div class="c" style="left:916.0px;top:881px;width:140px">-68.56</div>
<div class="c" style="left:985.0px;top:881px;width:140px">3577.01</div>
<div class="c" style="left:1080.0px;top:881px;width:140px">14/10/2025 01:…</div>
<div class="c g" style="left:1178.0px;top:881px;width:140px">12 700.40</div>
<div class="c g" style="left:1238.6px;top:881px;width:140px">12230</div>
<div class="c g" style="left:1301.0px;top:881px;width:140px">12 776.16</div>
<div class="rl" style="top:903px"></div>
<div class="c" style="left:303.0px;top:912px;width:140px">30</div>
<div class="c" style="left:372.0px;top:912px;width:140px">EMA_RS…</div>
<div class="c" style="left:467.0px;top:912px;width:140px">14/10/2025 12:…</div>
<div class="c" style="left:565.0px;top:912px;width:140px">XAUEUR</div>
<div class="c" style="left:625.0px;top:912px;width:140px">0.9…</div>
<div class="c" style="left:672.0px;top:912px;width:140px">90 Oz</div>
<div class="c" style="left:722.0px;top:912px;width:140px">Buy</div>
<div class="c" style="left:786.0px;top:912px;width:140px">3574.71</div>
<div class="c" style="left:855.6px;top:912px;width:140px">-7.20</div>
<div class="c" style="left:916.0px;top:912px;width:140px">-137.11</div>
<div class="c" style="left:985.0px;top:912px;width:140px">3694.86</div>
<div class="c" style="left:1080.0px;top:912px;width:140px">16/10/2025 20:…</div>
<div class="c g" style="left:1178.0px;top:912px;width:140px">12 407.24</div>
<div class="c g" style="left:1238.6px;top:912px;width:140px">12015</div>
<div class="c g" style="left:1301.0px;top:912px;width:140px">12 551.55</div>
<svg class="a" style="left:1418px;top:447px" width="11" height="10"><path d="M1 8.5 L5.5 1 L10 8.5 Z" fill="#8a8a8a"/></svg>
<div class="a" style="left:1419px;top:463px;width:9px;height:250px;background:#8a8a8a;border-radius:4.5px"></div>
<svg class="a" style="left:1418px;top:921px" width="11" height="10"><path d="M1 1.5 L5.5 9 L10 1.5 Z" fill="#8a8a8a"/></svg>
<div class="ft" style="left:345px">Balance: <b>$ 215 390.65</b></div>
<div class="fs" style="left:506px"></div>
<div class="ft" style="left:532px">Equity: <b>$ 215 390.65</b></div>
<div class="fs" style="left:687px"></div>
<div class="ft" style="left:715px">Used margin: <b>$ 0.00</b></div>
<div class="fs" style="left:868px"></div>
<div class="ft" style="left:875px">Free marg… <b>$ 215 390.65</b></div>
<div class="fs" style="left:1049px"></div>
<div class="ft" style="left:1086px">Margin level: <b>N/A</b></div>
<div class="fs" style="left:1229px"></div>
<div class="ft" style="left:1271px">Unr. Net: <b>$ 0.00</b></div>
<svg class="a" style="left:1412px;top:939px" width="20" height="20"><polygon points="10.00,1.50 11.89,5.45 16.01,3.99 14.55,8.11 18.50,10.00 14.55,11.89 16.01,16.01 11.89,14.55 10.00,18.50 8.11,14.55 3.99,16.01 5.45,11.89 1.50,10.00 5.45,8.11 3.99,3.99 8.11,5.45" fill="#c8c8c8" stroke="#c8c8c8" stroke-width="0.8" stroke-linejoin="round"/><circle cx="10" cy="10" r="4.6" fill="#c8c8c8"/><circle cx="10" cy="10" r="3.1" fill="#565656"/></svg>
<div class="a" style="left:7px;top:979px;width:6px;height:6px;border-radius:3px;background:#0a8a0a"></div>
<div class="a" style="left:20px;top:974px">Trading sessions: Wellington, Sydney</div>
<div class="a" style="left:1022px;top:974px">Current time: <span style="color:#ff4f1a">&nbsp;17/03/2026 22:41:09&nbsp;&nbsp; UTC+0</span></div>
<div class="a" style="left:1309px;top:979px;width:0;height:0;border-left:3px solid transparent;border-right:3px solid transparent;border-top:6px solid #8a8a8a"></div>
<div class="a" style="left:1328px;top:974px">|&nbsp; 110 ms / 120 ms</div>
</body></html>
